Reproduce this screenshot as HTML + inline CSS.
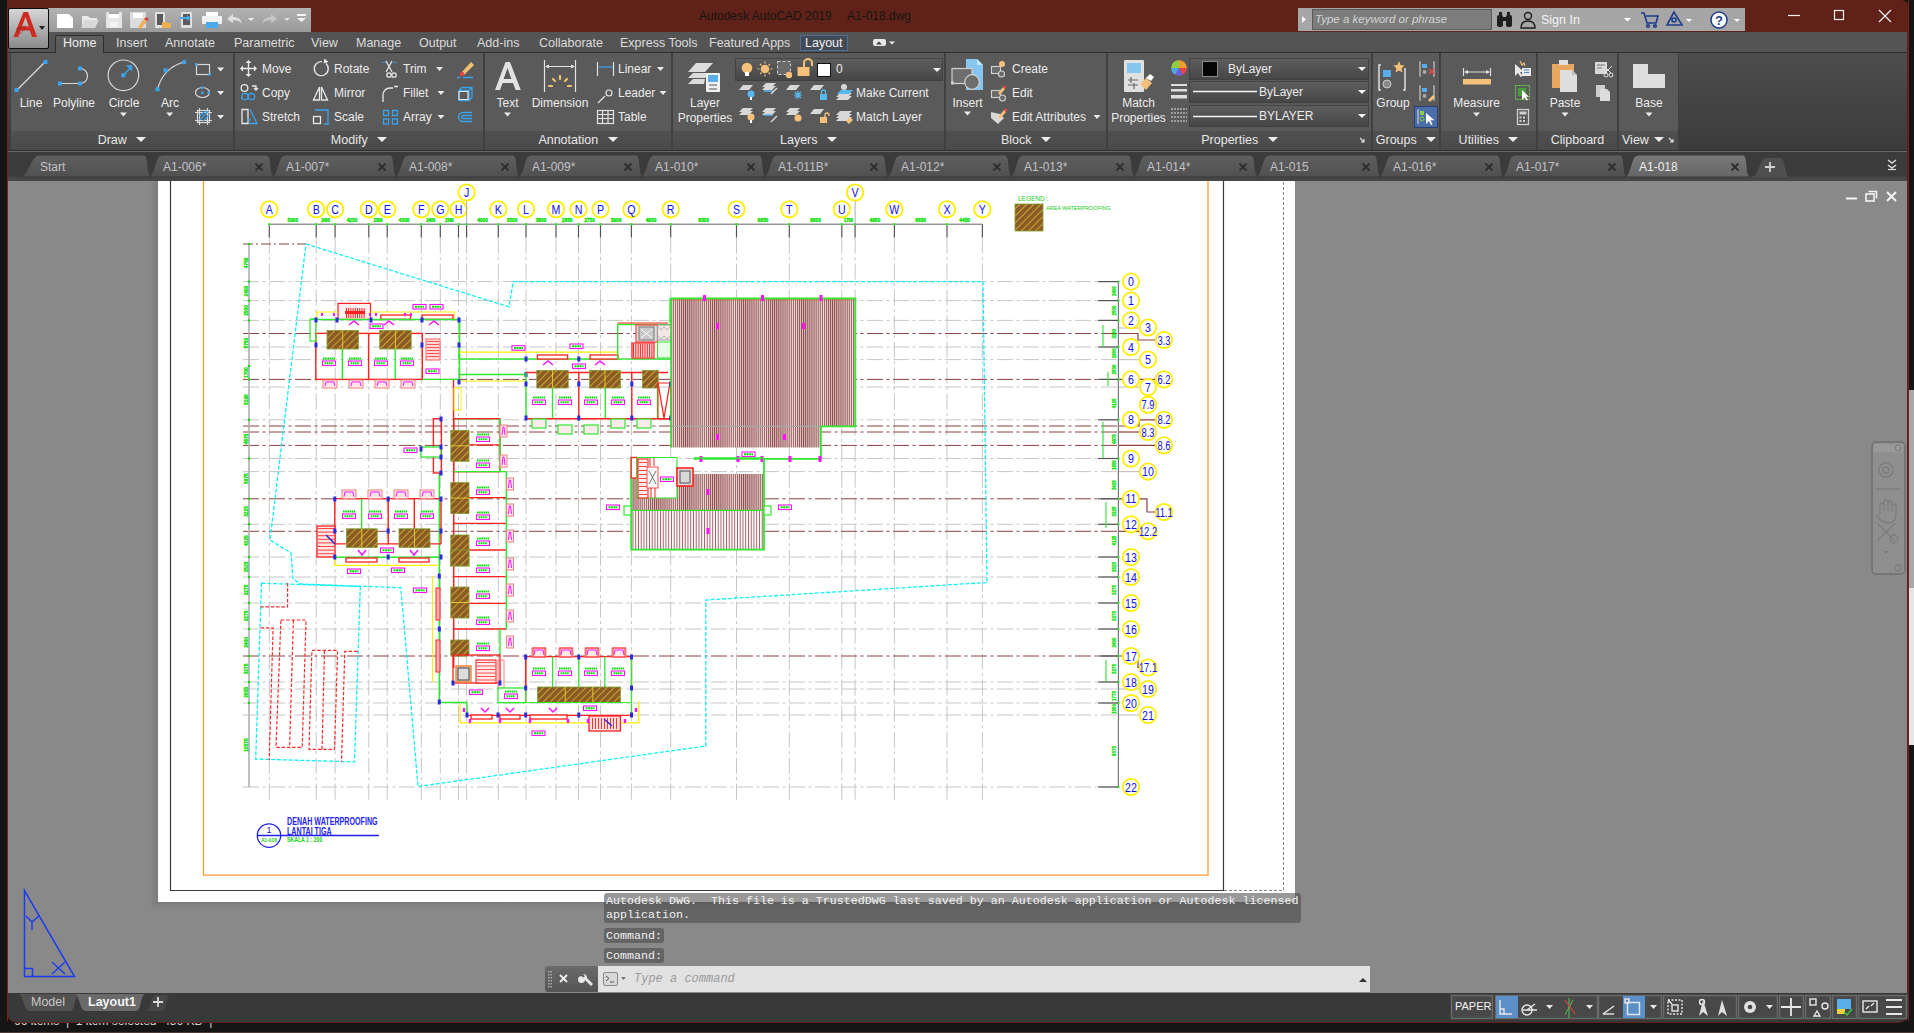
<!DOCTYPE html>
<html><head><meta charset="utf-8">
<style>
*{margin:0;padding:0;box-sizing:border-box}
html,body{width:1914px;height:1033px;overflow:hidden;background:#151515;font-family:"Liberation Sans",sans-serif;position:relative}
.a{position:absolute}
svg{position:absolute;overflow:visible}
.rt{position:absolute;top:36px;font-size:12.5px;color:#dcdcdc;line-height:14px;white-space:nowrap}
.pan{position:absolute;top:53px;height:97px;background:#5a5a5a;border-left:1px solid #404040;border-right:1px solid #404040}
.pt{position:absolute;top:131px;height:19px;background:linear-gradient(#505050,#4a4a4a);font-size:12.5px;color:#e8e8e8;line-height:18px;text-align:center}
.l{position:absolute;font-size:12px;color:#ececec;white-space:nowrap;line-height:14px}
.ft{position:absolute;top:156px;height:22px;font-size:12px;color:#c4c4c4;line-height:22px;white-space:nowrap}
.ftb{position:absolute;top:0;left:0;width:100%;height:22px}
.cx{position:absolute;top:0;font-size:12px;color:#9a9a9a}
.tri{display:inline-block;width:0;height:0;border-left:5px solid transparent;border-right:5px solid transparent;border-top:5.5px solid #ececec;margin-left:6px;vertical-align:2px}
.dd{position:absolute;width:0;height:0;border-left:3.5px solid transparent;border-right:3.5px solid transparent;border-top:4px solid #e6e6e6}
.lc{transform:translateX(-50%)}
.mono{font-family:"Liberation Mono",monospace;font-size:11.67px;color:#f2f2f2;line-height:14px;white-space:pre}
</style></head><body>
<!-- window frame -->
<div class="a" style="left:7px;top:0;width:1902px;height:1023px;background:#602218;border-radius:0 8px 10px 10px"></div>
<!-- title text -->
<div class="a" style="left:699px;top:9px;font-size:12px;color:#151515;white-space:pre">Autodesk AutoCAD 2019</div><div class="a" style="left:847px;top:9px;font-size:12px;color:#151515;white-space:pre">A1-018.dwg</div>
<!-- QAT -->
<div class="a" style="left:48px;top:8px;width:263px;height:24px;background:linear-gradient(#b2b2b2,#9a9a9a)"></div>
<svg style="left:0;top:0" width="320" height="32">
 <g fill="#fff"><path d="M57 14h12l4 4v10H57z"/></g>
 <path d="M82 16h6l2 2h7v2H86l-4 8z" fill="#e8e8e8"/><path d="M85 20h14l-4 8H81z" fill="#d8d8d8"/>
 <g fill="#e6e6e6"><rect x="106" y="12" width="16" height="16" rx="1"/></g><rect x="109" y="12" width="10" height="6" fill="#a8a8a8"/><rect x="110" y="22" width="8" height="5" fill="#f4f4f4"/><rect x="109" y="14" width="10" height="4" fill="#fff"/>
 <g fill="#dcdcdc"><rect x="130" y="12" width="16" height="16" rx="1"/></g><rect x="133" y="13" width="10" height="5" fill="#fff"/><path d="M138 27l6-8 3 2-6 8z" fill="#f0b060"/><path d="M144 19l2-2 3 2-2 2z" fill="#e04040"/>
 <rect x="155" y="12" width="10" height="16" rx="1" fill="#e0e0e0"/><rect x="157" y="14" width="6" height="11" fill="#5a5a5a"/><path d="M162 22h4l1 1h4v5h-9z" fill="#f0b050"/>
 <rect x="181" y="12" width="11" height="16" rx="1" fill="#e0e0e0"/><rect x="183" y="14" width="7" height="11" fill="#5a5a5a"/><path d="M180 17h7v-2l4 3-4 3v-2h-7z" fill="#4aa8ec"/>
 <rect x="206" y="12" width="12" height="4" fill="#fff"/><rect x="202" y="16" width="20" height="8" rx="1" fill="#f2f2f2"/><rect x="206" y="22" width="12" height="6" fill="#4aa8ec"/>
 <path d="M227 19l6-5v3c5 0 8 2 9 7-2-3-5-4-9-4v3z" fill="#e0e0e0"/>
 <path d="M248 18h6l-3 3z" fill="#f0f0f0"/>
 <path d="M277 19l-6-5v3c-5 0-8 2-9 7 2-3 5-4 9-4v3z" fill="#c6c6c6"/>
 <path d="M284 18h6l-3 3z" fill="#e0e0e0"/>
 <rect x="297" y="14" width="9" height="2" fill="#f4f4f4"/><path d="M297 18h9l-4.5 4z" fill="#f4f4f4"/>
</svg>
<!-- Info center -->
<div class="a" style="left:1298px;top:8px;width:447px;height:23px;background:#a6a6a6"></div>
<div class="a" style="left:1312px;top:9px;width:180px;height:21px;background:#7c7c7c;border:1px solid #5a5a5a"></div>
<div class="a" style="left:1315px;top:13px;font-size:11.5px;font-style:italic;color:#d4d4d4">Type a keyword or phrase</div>
<svg style="left:0;top:0" width="1914" height="32">
 <path d="M1302 16l4 3.5-4 3.5z" fill="#f4f4f4"/>
 <g fill="#1e1e1e"><rect x="1497" y="15" width="6" height="12" rx="2"/><rect x="1506" y="15" width="6" height="12" rx="2"/><rect x="1499" y="12" width="3" height="4"/><rect x="1507" y="12" width="3" height="4"/><rect x="1502" y="17" width="5" height="4"/></g>
 <g fill="none" stroke="#1e1e1e" stroke-width="1.4"><circle cx="1528" cy="16" r="3.5"/><path d="M1521 28c0-5 3-7 7-7s7 2 7 7z"/></g>
 <path d="M1624 18h7l-3.5 3.5z" fill="#fff"/>
 <g fill="none" stroke="#1c3c8c" stroke-width="1.6"><path d="M1641 13h3l3 10h9l2-7h-12"/><circle cx="1648" cy="26" r="1.3"/><circle cx="1655" cy="26" r="1.3"/></g>
 <g fill="none" stroke="#1c3c8c" stroke-width="1.6"><path d="M1674 12l-7 13h15z"/><circle cx="1674" cy="20" r="2"/></g>
 <path d="M1686 19h6l-3 3z" fill="#fff"/>
 <circle cx="1719" cy="20" r="8" fill="#fff" stroke="#1c3c8c" stroke-width="1.5"/>
 <text x="1715" y="25" font-size="13" font-weight="bold" fill="#1c3c8c" font-family="Liberation Sans">?</text>
 <path d="M1734 19h6l-3 3z" fill="#fff"/>
 <g stroke="#f0f0f0" stroke-width="1.2" fill="none"><path d="M1788 15.5h12"/><rect x="1834.5" y="10.5" width="9" height="9"/><path d="M1879 10l12 12M1891 10l-12 12"/></g>
</svg>
<div class="a" style="left:1541px;top:13px;font-size:12.5px;color:#f4f4f4">Sign In</div>

<!-- Ribbon tab bar -->
<div class="a" style="left:8px;top:32px;width:1899px;height:21px;background:#545454;border-bottom:1.5px solid #2e2e2e"></div>
<div class="a" style="left:55px;top:35px;width:49px;height:19px;background:linear-gradient(#5e5e5e,#5a5a5a);border:1px solid #2e2e2e;border-bottom:none;border-radius:2px 2px 0 0"></div>
<div class="a" style="left:800px;top:35px;width:48px;height:16px;border:1px solid #4f6e9a;background:#434a55"></div>
<div class="rt" style="left:63px;color:#f0f0f0">Home</div>
<div class="rt" style="left:116px">Insert</div>
<div class="rt" style="left:165px">Annotate</div>
<div class="rt" style="left:234px">Parametric</div>
<div class="rt" style="left:311px">View</div>
<div class="rt" style="left:356px">Manage</div>
<div class="rt" style="left:419px">Output</div>
<div class="rt" style="left:477px">Add-ins</div>
<div class="rt" style="left:539px">Collaborate</div>
<div class="rt" style="left:620px">Express Tools</div>
<div class="rt" style="left:709px">Featured Apps</div>
<div class="rt" style="left:805px;color:#f0f0f0">Layout</div>
<svg style="left:0;top:0" width="900" height="55">
 <rect x="873" y="39" width="13" height="7" rx="2" fill="#e8e8e8"/><path d="M876 44.5l3-3 3 3z" fill="#3c3c3c"/><path d="M889 41.5h6l-3 3z" fill="#e8e8e8"/>
</svg>

<!-- Ribbon body -->
<div class="a" style="left:8px;top:53px;width:1899px;height:98px;background:linear-gradient(#4d4d4d,#3b3b3b)"></div>
<div class="a" style="left:8px;top:150px;width:1899px;height:1px;background:#2e2e2e"></div><div class="a" style="left:8px;top:151px;width:1899px;height:1px;background:#6a6a6a"></div>
<div class="pan" style="left:10px;width:224px"></div>
<div class="pan" style="left:234px;width:250px"></div>
<div class="pan" style="left:484px;width:188px"></div>
<div class="pan" style="left:672px;width:273px"></div>
<div class="pan" style="left:945px;width:162px"></div>
<div class="pan" style="left:1107px;width:265px"></div>
<div class="pan" style="left:1372px;width:68px"></div>
<div class="pan" style="left:1440px;width:97px"></div>
<div class="pan" style="left:1537px;width:81px"></div>
<div class="pan" style="left:1618px;width:61px"></div>
<div class="pt" style="left:11px;width:222px">Draw <i class="tri"></i></div>
<div class="pt" style="left:235px;width:248px">Modify <i class="tri"></i></div>
<div class="pt" style="left:485px;width:186px">Annotation <i class="tri"></i></div>
<div class="pt" style="left:673px;width:271px">Layers <i class="tri"></i></div>
<div class="pt" style="left:946px;width:160px">Block <i class="tri"></i></div>
<div class="pt" style="left:1108px;width:263px">Properties <i class="tri"></i></div>
<div class="pt" style="left:1373px;width:66px">Groups <i class="tri"></i></div>
<div class="pt" style="left:1441px;width:95px">Utilities <i class="tri"></i></div>
<div class="pt" style="left:1538px;width:79px">Clipboard</div>
<div class="pt" style="left:1619px;width:59px;text-align:left;padding-left:3px">View<i class="tri" style="margin-left:5px"></i></div>
<!-- App button -->
<div class="a" style="left:8px;top:8px;width:41px;height:41px;border:1.5px solid #0c0c0c;border-radius:2px;background:linear-gradient(#d6d6d6,#8a8a8a)"></div>
<svg style="left:8px;top:8px" width="41" height="41">
 <path d="M5.5 29L15.5 4h4.5l9 25h-5l-2.2-6.5h-9.2L10.3 29z M14 18.5h6.8l-3.3-9.5z" fill="#cf2a22" fill-rule="evenodd"/><path d="M9 24l4-4M12 26l5-6M8 21l10-3" stroke="#7a1410" stroke-width="0.8" opacity="0.7"/>
 <path d="M31 18h6l-3 4z" fill="#222"/>
</svg>
<div id="ribbonc"></div>
<svg style="left:0;top:0" width="1700" height="152">
<defs>
 <g id="ddw"><path d="M-3.5 -2h7l-3.5 4z" fill="#ececec"/></g>
</defs>
<!-- Draw panel -->
<g stroke="#d8d8d8" stroke-width="1.2" fill="none">
 <path d="M17 90L45 62"/>
 <path d="M60 83.5h20M80 68.5a7.5 7.5 0 0 1 0 15"/>
 <circle cx="123.4" cy="75.3" r="15.3"/>
 <path d="M157.5 89.3Q163 68 184 62"/>
 <rect x="196.5" y="64.5" width="13" height="10"/>
 <ellipse cx="202.5" cy="92.5" rx="7" ry="5"/>
 <rect x="197.5" y="110.5" width="12" height="12"/><path d="M195 112.5h17M195 120.5h17M199.5 108v17M207.5 108v17"/>
</g>
<g fill="#3ba4ee">
 <rect x="14.5" y="88" width="4" height="4"/><rect x="43.5" y="60" width="4" height="4"/>
 <rect x="58" y="81.5" width="4" height="4"/><rect x="78" y="81.5" width="4" height="4"/><rect x="78" y="66.5" width="4" height="4"/>
 <rect x="121.4" y="73.3" width="4" height="4"/><path d="M124 74.5l6-6M127.5 66h4v4z" stroke="#3ba4ee" stroke-width="1.3"/>
 <rect x="155.5" y="87.3" width="4" height="4"/><rect x="163.5" y="68.4" width="4" height="4"/><rect x="182.3" y="60.2" width="4" height="4"/>
 <rect x="195" y="63" width="2.5" height="2.5"/><rect x="208.5" y="73" width="2.5" height="2.5"/>
 <rect x="201" y="86.5" width="2.5" height="2.5"/><rect x="201" y="91.5" width="2.5" height="2.5"/><rect x="207.5" y="91.5" width="2.5" height="2.5"/>
 <path d="M199.5 120l9-9M199.5 116l6-5M203 121l6-6" stroke="#3ba4ee" stroke-width="1.2"/>
</g>
<use href="#ddw" x="123.4" y="114.5"/><use href="#ddw" x="169.6" y="114.5"/>
<use href="#ddw" x="220.6" y="69.4"/><use href="#ddw" x="220.6" y="93"/><use href="#ddw" x="220.6" y="117"/>
<!-- Modify panel -->
<g stroke="#e8e8e8" stroke-width="1.3" fill="none">
 <path d="M248.5 61v15M241 68.5h15"/>
 <path d="M326 63.5a7 7 0 1 1 -4 -1.8"/>
 <path d="M313.5 100l6-13v13zM321.5 87l6 13h-6z" stroke="#e8e8e8"/>
 <path d="M252 86h4v3M254 88l2 2 2-2"/><circle cx="244.5" cy="88" r="3.3"/>
 <path d="M242 109.5h6v14h-6z"/>
 <rect x="313.5" y="116.5" width="7" height="7"/>
 <path d="M383 102v-7a7 7 0 0 1 7-7h3M394 86.5h4"/>
</g>
<g fill="#e8e8e8"><path d="M248.5 60l3 3h-6zM248.5 77l3-3h-6zM240 68.5l3-3v6zM257 68.5l-3-3v6z"/><path d="M324.5 58.5l4 3.5-5 1.5z"/></g>
<g stroke="#3ba4ee" stroke-width="1.3" fill="none">
 <circle cx="245" cy="96.5" r="3.2"/><circle cx="251.5" cy="96.5" r="3.2"/>
 <path d="M250 109.5l7 14h-8M247 120h4"/>
 <path d="M315 110h13v14h-4"/>
 <rect x="383.5" y="110.5" width="5" height="5"/><rect x="392.5" y="110.5" width="5" height="5"/><rect x="383.5" y="119" width="5" height="5"/><rect x="392.5" y="119" width="5" height="5"/>
 <path d="M472 112.5h-9a4.5 4.5 0 0 0 0 9h9M472 115.5h-9a1.5 1.5 0 0 0 0 3h9"/>
 <path d="M459 90.5h10v10h-10zM459 90.5l3-3h10v10l-3 3M469 90.5l3-3"/>
 <path d="M457 77.5h3M463 77.5h10"/>
</g>
<g stroke="#e8e8e8" stroke-width="1.2" fill="none"><path d="M459 91.5h9v8h-9z"/></g>
<g stroke="#e8e8e8" stroke-width="1.3" fill="none"><path d="M386 61l6 11M392 61l-6 11"/><circle cx="389" cy="75" r="2.2"/><circle cx="394" cy="75" r="2.2"/></g>
<path d="M382 62.5h4M393 62.5h5" stroke="#3ba4ee" stroke-width="1.2" stroke-dasharray="1.5 1"/>
<path d="M461 73l10-11 3 3-10 10z" fill="#f0c070"/><circle cx="462" cy="74" r="2.2" fill="#e84545"/>
<use href="#ddw" x="439.5" y="69"/><use href="#ddw" x="441" y="93"/><use href="#ddw" x="441" y="117"/>
<!-- Annotation -->
<path d="M495 90l10.5-28h4.5l10.8 28h-5.2l-2.6-7h-10.4l-2.6 7zM503.6 79h7.8l-3.9-11z" fill="#e2e2e2" fill-rule="evenodd"/>
<use href="#ddw" x="507.5" y="114.5"/>
<g stroke="#e2e2e2" stroke-width="1.2" fill="none"><path d="M544.5 60v32M575.5 60v32M546 66.5h28"/></g>
<g fill="#e2e2e2"><path d="M545 66.5l4-2v4zM575 66.5l-4-2v4z"/></g>
<g stroke="#f0c070" stroke-width="2.2" stroke-linecap="round"><path d="M560 76v3M553 79l2 2M567 79l-2 2M549 86h3M568 86h3"/></g>
<g stroke="#e2e2e2" stroke-width="1.2" fill="none"><path d="M597.5 62v14M613.5 62v14"/>
 <path d="M598 103l7-7"/><circle cx="609" cy="93" r="3"/>
 <rect x="597.5" y="110.5" width="16" height="13"/><path d="M597.5 114.5h16M597.5 118.5h16M602.5 110.5v13M608 110.5v13"/></g>
<path d="M599 67h14" stroke="#3ba4ee" stroke-width="1.2"/>
<use href="#ddw" x="660.5" y="69"/><use href="#ddw" x="663" y="93"/>
<!-- Layers -->
<g fill="#dcdcdc"><path d="M688 72l8-9h17l-8 9z"/><path d="M688 78l5-5h17l-5 5z"/><path d="M688 84l5-5h12l-1 5z"/></g>
<rect x="706" y="73" width="14" height="19" rx="1" fill="#f0f0f0"/><rect x="708" y="75" width="10" height="7" fill="#58aee8"/><path d="M709 85h8M709 89h8" stroke="#555" stroke-width="1"/>
<rect x="735.5" y="58.5" width="207" height="22" fill="url(#cbg)" stroke="#2e2e2e" stroke-dasharray="1 1"/>
<circle cx="747" cy="68" r="5.3" fill="#f5c07a"/><rect x="745" y="72" width="4" height="4" fill="#fff"/>
<circle cx="765" cy="69" r="4.3" fill="#f5c07a"/><g stroke="#f5c07a" stroke-width="1.2"><path d="M765 61.5v2M765 74.5v2M757.5 69h2M770.5 69h2M760 64l1.5 1.5M770 64l-1.5 1.5M760 74l1.5-1.5M770 74l-1.5-1.5"/></g>
<rect x="777.5" y="61.5" width="13" height="13" fill="#6a6a6a" stroke="#d0d0d0" stroke-dasharray="3 2"/><circle cx="789" cy="75" r="3.2" fill="#f5c07a"/>
<rect x="797.5" y="67" width="12" height="9" fill="#f5c07a"/><path d="M804 67v-4a4 4 0 0 1 8 0v3" stroke="#f5c07a" stroke-width="2" fill="none"/>
<rect x="817.5" y="63.5" width="13" height="13" fill="#fff" stroke="#111" stroke-width="1"/>
<path d="M933 68h8l-4 4z" fill="#f0f0f0"/>
<g fill="#d8d8d8">
 <path d="M739 90l4-5h10l-4 5z"/><path d="M762 87l4-4h10l-4 4zM762 90l4-4h10l-4 4z"/><path d="M786 90l4-5h10l-4 5z"/><path d="M810 90l4-5h10l-4 5z"/>
 <path d="M739 112l4-4h10l-4 4zM739 115l4-4h10l-4 4z"/><path d="M762 112l4-4h10l-4 4zM762 115l4-4h10l-4 4z"/><path d="M786 112l4-4h10l-4 4zM786 115l4-4h10l-4 4z"/><path d="M810 114l4-5h10l-4 5z"/>
 <path d="M836 97l4-4h12l-4 4zM836 100l4-4h12l-4 4z"/><path d="M836 121l4-4h12l-4 4zM836 118l4-4h12l-4 4zM836 115l4-4h12l-4 4z"/>
</g>
<circle cx="751" cy="94" r="3.5" fill="#58b8f0"/><rect x="750" y="97" width="2" height="3" fill="#fff"/>
<path d="M764 91h9" stroke="#58b8f0" stroke-width="1.5"/><path d="M777 88l-6 6" stroke="#e0e0e0" stroke-width="1.2"/>
<g stroke="#58b8f0" stroke-width="1.2"><path d="M798 91v8M794 95h8M795 92l6 6M801 92l-6 6"/></g>
<rect x="820" y="94" width="7" height="6" fill="#58b8f0"/><path d="M821.5 94v-2a2 2 0 0 1 4 0v2" stroke="#58b8f0" fill="none" stroke-width="1.3"/>
<path d="M837 94l4-4h12l-4 4z" fill="#58b8f0"/><circle cx="844" cy="87" r="3" fill="#d8d8d8"/>
<circle cx="751" cy="117" r="3.5" fill="#f5c07a"/><rect x="750" y="120" width="2" height="3" fill="#fff"/>
<path d="M764 115h9" stroke="#58b8f0" stroke-width="1.5"/><path d="M771 122l6-6" stroke="#e0e0e0" stroke-width="1.2"/>
<circle cx="798" cy="118" r="3.5" fill="#f5c07a"/>
<rect x="820" y="117" width="7" height="6" fill="#f5c07a"/><path d="M825 117v-2a2 2 0 0 1 4 0v1" stroke="#f5c07a" fill="none" stroke-width="1.3"/>
<path d="M846 121l4-4 3 3-4 4z" fill="#f5c07a"/>
<!-- Block -->
<path d="M966 59h11l6 6v25h-17z" fill="#86c6f0"/><path d="M977 59v6h6z" fill="#c8e4f8"/>
<rect x="952" y="68.5" width="20" height="15" fill="#6e6e6e" stroke="#d0d0d0" stroke-width="1.2"/>
<circle cx="972" cy="82" r="7.3" fill="#6e6e6e" stroke="#d0d0d0" stroke-width="1.2"/>
<rect x="951" y="81.5" width="3" height="3" fill="#d0d0d0"/>
<use href="#ddw" x="967.5" y="113.5"/>
<g stroke="#d0d0d0" stroke-width="1.1" fill="#6a6a6a"><rect x="991.5" y="66.5" width="9" height="7"/><circle cx="1001.5" cy="74" r="3"/><rect x="991.5" y="90.5" width="9" height="7"/><circle cx="1002.5" cy="98" r="3"/></g>
<circle cx="1002" cy="64" r="3" fill="#f5c07a"/>
<path d="M998 93l5-6 2 2-5 6z" fill="#f5c07a"/><path d="M1003 87l1.5-2 2 2-1.5 2z" fill="#e84545"/>
<path d="M991 112v6l7 6 6-6-4-4z" fill="#d8d8d8"/><path d="M998 117l6-7 2 2-6 7z" fill="#f5c07a"/><path d="M1004 110l1.5-2 2 2-1.5 2z" fill="#e84545"/>
<use href="#ddw" x="1097" y="117"/>
<!-- Properties -->
<rect x="1124" y="60" width="20" height="32" rx="1" fill="#e0e0e0"/><rect x="1127" y="63" width="14" height="10" fill="#86c6f0"/>
<path d="M1128 80h10M1128 85h10M1131 77v6M1134 83v6" stroke="#666" stroke-width="1.2"/>
<path d="M1140 84l6-6 6 5-6 7z" fill="#f5c07a"/><path d="M1146 78l4-4 4 3-3 4z" fill="#fff"/>
<circle cx="1179" cy="68" r="7.8" fill="#e84545"/><path d="M1179 68v-7.8a7.8 7.8 0 0 1 7.8 7.8z" fill="#f0a030"/><path d="M1179 68h-7.8a7.8 7.8 0 0 1 7.8 -7.8z" fill="#8ad040"/><path d="M1179 68h-7.8a7.8 7.8 0 0 0 4 6.8z" fill="#4aa8ec"/><path d="M1179 68l-3.8 6.8a7.8 7.8 0 0 0 7.6 0z" fill="#6060e0"/>
<g fill="#dedede"><rect x="1171" y="84" width="16" height="2"/><rect x="1171" y="89" width="16" height="2.5"/><rect x="1171" y="95" width="16" height="3.5"/></g>
<g stroke="#dedede" stroke-width="1.2" stroke-dasharray="2 1"><path d="M1171 109h16M1171 113h16M1171 117h16M1171 121h16"/></g>
<linearGradient id="cbg" x1="0" x2="0" y1="0" y2="1"><stop offset="0" stop-color="#5e5e5e"/><stop offset="1" stop-color="#464646"/></linearGradient><g fill="url(#cbg)" stroke="#2e2e2e" stroke-dasharray="1 1"><rect x="1189.5" y="58.5" width="179" height="21"/><rect x="1189.5" y="81.5" width="179" height="21"/><rect x="1189.5" y="105.5" width="179" height="21"/></g>
<rect x="1202.5" y="61.5" width="15" height="15" fill="#050505" stroke="#888"/>
<path d="M1193 91.5h64M1193 116.5h64" stroke="#f4f4f4" stroke-width="1.3"/>
<path d="M1358 67h8l-4 4zM1358 90h8l-4 4zM1358 114h8l-4 4z" fill="#f0f0f0"/>
<path d="M1360 138l4 4M1364 139v3h-3" stroke="#e0e0e0" stroke-width="1.1" fill="none"/>
<!-- Groups -->
<path d="M1381 65h-2v25h2M1405 68v22h-2" stroke="#e0e0e0" stroke-width="1.5" fill="none"/>
<rect x="1383" y="70" width="8" height="7" fill="#58aee8"/><circle cx="1387" cy="84" r="4" fill="#888" stroke="#ccc"/>
<path d="M1399 61l1.5 4 4 .5-3 3 1 4-3.5-2-3.5 2 1-4-3-3 4-.5z" fill="#f5c07a"/>
<g stroke="#d0d0d0" stroke-width="1.1" fill="none"><path d="M1421 62h-1v14h1M1433 62h1v14h-1M1421 86h-1v14h1M1433 86h1v14h-1"/></g>
<rect x="1422" y="64" width="5" height="4" fill="#58aee8"/><circle cx="1424.5" cy="72" r="2" fill="#aaa"/>
<path d="M1429 69l5 5M1434 69l-5 5" stroke="#e84545" stroke-width="1.5"/>
<rect x="1422" y="88" width="5" height="4" fill="#58aee8"/><circle cx="1424.5" cy="96" r="2" fill="#aaa"/><path d="M1428 100l5-5 2 2-5 5z" fill="#f5c07a"/>
<rect x="1414.5" y="106.5" width="23" height="21" fill="#4c6ea8" stroke="#2a3e70"/>
<path d="M1419 110h-1v13h1" stroke="#ddd" fill="none"/><rect x="1420" y="111" width="4" height="4" fill="#8ad040"/><circle cx="1422" cy="119" r="2" fill="none" stroke="#8ad040"/>
<path d="M1426 113v11l3-3 2 4 1.5-.7-2-4h4z" fill="#fff"/>
<!-- Utilities -->
<rect x="1463" y="79" width="28" height="5.5" fill="#f5c07a"/>
<path d="M1463.5 68v8M1490.5 68v8M1465 72h24" stroke="#e0e0e0" stroke-width="1.2"/>
<path d="M1464 72l4-2v4zM1490 72l-4-2v4z" fill="#e0e0e0"/>
<use href="#ddw" x="1476.5" y="114.4"/>
<path d="M1515 64v12l3-3 2.5 4 2-1-2.5-4h4z" fill="#e8e8e8"/><rect x="1522" y="68" width="9" height="8" fill="#e8e8e8"/><path d="M1524 70h5M1524 72.5h5" stroke="#4a8ad0"/><path d="M1520 61l2 4 2-2 1 3" stroke="#f5c07a" fill="none" stroke-width="1.2"/>
<rect x="1515.5" y="85.5" width="14" height="14" fill="none" stroke="#6ad040" stroke-dasharray="2 1"/><rect x="1518" y="88" width="8" height="8" fill="#4a9a40"/><path d="M1522 90v10l2.5-2.5 2 3 1.5-.8-2-3h3z" fill="#fff"/>
<rect x="1517.5" y="109.5" width="11" height="15" fill="none" stroke="#d0d0d0" stroke-width="1.3"/><rect x="1519.5" y="111.5" width="7" height="3" fill="#d0d0d0"/><g fill="#d0d0d0"><rect x="1519.5" y="116.5" width="2" height="2"/><rect x="1523" y="116.5" width="2" height="2"/><rect x="1519.5" y="120" width="2" height="2"/><rect x="1523" y="120" width="2" height="2"/></g>
<!-- Clipboard -->
<rect x="1552" y="64" width="22" height="24" fill="#e8a860"/><rect x="1559" y="60" width="9" height="5" fill="#e0e0e0"/>
<path d="M1560 70h12l5 5v17h-17z" fill="#dedede"/><path d="M1572 70v5h5z" fill="#bdbdbd"/>
<use href="#ddw" x="1565" y="114.4"/>
<rect x="1595" y="62" width="12" height="12" fill="#d8d8d8"/><path d="M1597 65h8M1597 68h5" stroke="#777"/><circle cx="1606" cy="75" r="2" fill="none" stroke="#e0e0e0"/><circle cx="1611" cy="75" r="2" fill="none" stroke="#e0e0e0"/><path d="M1604 66l7 7M1612 66l-7 7" stroke="#e0e0e0"/>
<rect x="1596" y="85" width="9" height="12" fill="#cdcdcd"/><path d="M1600 89h7l3 3v9h-10z" fill="#dcdcdc"/>
<!-- View -->
<path d="M1633 64h15v10h17v14h-32z" fill="#dedede"/>
<use href="#ddw" x="1649" y="114.4"/>
<path d="M1669 138l4 4M1673 139v3h-3" stroke="#e0e0e0" stroke-width="1.1" fill="none"/>
</svg>
<div class="l lc" style="left:31px;top:96px">Line</div>
<div class="l lc" style="left:74px;top:96px">Polyline</div>
<div class="l lc" style="left:124px;top:96px">Circle</div>
<div class="l lc" style="left:170px;top:96px">Arc</div>
<div class="l" style="left:262px;top:62px">Move</div>
<div class="l" style="left:262px;top:86px">Copy</div>
<div class="l" style="left:262px;top:110px">Stretch</div>
<div class="l" style="left:334px;top:62px">Rotate</div>
<div class="l" style="left:334px;top:86px">Mirror</div>
<div class="l" style="left:334px;top:110px">Scale</div>
<div class="l" style="left:403px;top:62px">Trim</div>
<div class="l" style="left:403px;top:86px">Fillet</div>
<div class="l" style="left:403px;top:110px">Array</div>
<div class="l lc" style="left:507.5px;top:96px">Text</div>
<div class="l lc" style="left:560px;top:96px">Dimension</div>
<div class="l" style="left:618px;top:62px">Linear</div>
<div class="l" style="left:618px;top:86px">Leader</div>
<div class="l" style="left:618px;top:110px">Table</div>
<div class="l lc" style="left:705px;top:96px">Layer</div>
<div class="l lc" style="left:705px;top:111px">Properties</div>
<div class="l" style="left:836px;top:62px">0</div>
<div class="l" style="left:856px;top:86px">Make Current</div>
<div class="l" style="left:856px;top:110px">Match Layer</div>
<div class="l lc" style="left:967.5px;top:96px">Insert</div>
<div class="l" style="left:1012px;top:62px">Create</div>
<div class="l" style="left:1012px;top:86px">Edit</div>
<div class="l" style="left:1012px;top:110px">Edit Attributes</div>
<div class="l lc" style="left:1138.5px;top:96px">Match</div>
<div class="l lc" style="left:1138.5px;top:111px">Properties</div>
<div class="l" style="left:1228px;top:62px">ByLayer</div>
<div class="l" style="left:1259px;top:85px">ByLayer</div>
<div class="l" style="left:1259px;top:109px">BYLAYER</div>
<div class="l lc" style="left:1393px;top:96px">Group</div>
<div class="l lc" style="left:1476.5px;top:96px">Measure</div>
<div class="l lc" style="left:1565px;top:96px">Paste</div>
<div class="l lc" style="left:1649px;top:96px">Base</div>


<!-- File tabs -->
<div class="a" style="left:8px;top:152px;width:1899px;height:29px;background:#3b3b3b"></div>
<svg style="left:0;top:0" width="1914" height="181">
<rect x="8" y="176.5" width="1899" height="4.5" fill="#474747"/>
<defs><linearGradient id="tg" x1="0" y1="0" x2="0" y2="1"><stop offset="0" stop-color="#5f5f5f"/><stop offset="1" stop-color="#505050"/></linearGradient><linearGradient id="tga" x1="0" y1="0" x2="0" y2="1"><stop offset="0" stop-color="#7a7a7a"/><stop offset="1" stop-color="#656565"/></linearGradient></defs>
<path d="M20 177C27 177 31 155 39 155H144C150 155 146 177 152 177Z" fill="url(#tg)" stroke="#3a3a3a" stroke-width="1"/>
<path d="M148 177C155 177 154 155 162 155H267C273 155 269 177 275 177Z" fill="url(#tg)" stroke="#3a3a3a" stroke-width="1"/>
<path d="M255.5 163.5l7 7M262.5 163.5l-7 7" stroke="#2e2e2e" stroke-width="1.8"/>
<path d="M271 177C278 177 277 155 285 155H390C396 155 392 177 398 177Z" fill="url(#tg)" stroke="#3a3a3a" stroke-width="1"/>
<path d="M378.5 163.5l7 7M385.5 163.5l-7 7" stroke="#2e2e2e" stroke-width="1.8"/>
<path d="M394 177C401 177 400 155 408 155H513C519 155 515 177 521 177Z" fill="url(#tg)" stroke="#3a3a3a" stroke-width="1"/>
<path d="M501.5 163.5l7 7M508.5 163.5l-7 7" stroke="#2e2e2e" stroke-width="1.8"/>
<path d="M517 177C524 177 523 155 531 155H636C642 155 638 177 644 177Z" fill="url(#tg)" stroke="#3a3a3a" stroke-width="1"/>
<path d="M624.5 163.5l7 7M631.5 163.5l-7 7" stroke="#2e2e2e" stroke-width="1.8"/>
<path d="M640 177C647 177 646 155 654 155H759C765 155 761 177 767 177Z" fill="url(#tg)" stroke="#3a3a3a" stroke-width="1"/>
<path d="M747.5 163.5l7 7M754.5 163.5l-7 7" stroke="#2e2e2e" stroke-width="1.8"/>
<path d="M763 177C770 177 769 155 777 155H882C888 155 884 177 890 177Z" fill="url(#tg)" stroke="#3a3a3a" stroke-width="1"/>
<path d="M870.5 163.5l7 7M877.5 163.5l-7 7" stroke="#2e2e2e" stroke-width="1.8"/>
<path d="M886 177C893 177 892 155 900 155H1005C1011 155 1007 177 1013 177Z" fill="url(#tg)" stroke="#3a3a3a" stroke-width="1"/>
<path d="M993.5 163.5l7 7M1000.5 163.5l-7 7" stroke="#2e2e2e" stroke-width="1.8"/>
<path d="M1009 177C1016 177 1015 155 1023 155H1128C1134 155 1130 177 1136 177Z" fill="url(#tg)" stroke="#3a3a3a" stroke-width="1"/>
<path d="M1116.5 163.5l7 7M1123.5 163.5l-7 7" stroke="#2e2e2e" stroke-width="1.8"/>
<path d="M1132 177C1139 177 1138 155 1146 155H1251C1257 155 1253 177 1259 177Z" fill="url(#tg)" stroke="#3a3a3a" stroke-width="1"/>
<path d="M1239.5 163.5l7 7M1246.5 163.5l-7 7" stroke="#2e2e2e" stroke-width="1.8"/>
<path d="M1255 177C1262 177 1261 155 1269 155H1374C1380 155 1376 177 1382 177Z" fill="url(#tg)" stroke="#3a3a3a" stroke-width="1"/>
<path d="M1362.5 163.5l7 7M1369.5 163.5l-7 7" stroke="#2e2e2e" stroke-width="1.8"/>
<path d="M1378 177C1385 177 1384 155 1392 155H1497C1503 155 1499 177 1505 177Z" fill="url(#tg)" stroke="#3a3a3a" stroke-width="1"/>
<path d="M1485.5 163.5l7 7M1492.5 163.5l-7 7" stroke="#2e2e2e" stroke-width="1.8"/>
<path d="M1501 177C1508 177 1507 155 1515 155H1620C1626 155 1622 177 1628 177Z" fill="url(#tg)" stroke="#3a3a3a" stroke-width="1"/>
<path d="M1608.5 163.5l7 7M1615.5 163.5l-7 7" stroke="#2e2e2e" stroke-width="1.8"/>
<path d="M1624 177C1631 177 1630 155 1638 155H1743C1749 155 1745 177 1751 177Z" fill="url(#tga)" stroke="#3a3a3a" stroke-width="1"/>
<path d="M1731.5 163.5l7 7M1738.5 163.5l-7 7" stroke="#2e2e2e" stroke-width="1.8"/>
<path d="M1752 177C1758 177 1760 158 1766 158H1780C1786 158 1784 177 1790 177Z" fill="#4f4f4f"/>
<path d="M1765 167h10M1770 162v10" stroke="#d0d0d0" stroke-width="1.8"/>
<path d="M1888 160l4 3 4-3M1888 165l4 3 4-3" stroke="#ddd" stroke-width="1.5" fill="none"/><path d="M1888 169.5h8" stroke="#ddd" stroke-width="1.2"/>
</svg>
<div class="ft" style="left:40px;color:#c2c2c8">Start</div>
<div class="ft" style="left:163px;color:#c2c2c8">A1-006*</div>
<div class="ft" style="left:286px;color:#c2c2c8">A1-007*</div>
<div class="ft" style="left:409px;color:#c2c2c8">A1-008*</div>
<div class="ft" style="left:532px;color:#c2c2c8">A1-009*</div>
<div class="ft" style="left:655px;color:#c2c2c8">A1-010*</div>
<div class="ft" style="left:778px;color:#c2c2c8">A1-011B*</div>
<div class="ft" style="left:901px;color:#c2c2c8">A1-012*</div>
<div class="ft" style="left:1024px;color:#c2c2c8">A1-013*</div>
<div class="ft" style="left:1147px;color:#c2c2c8">A1-014*</div>
<div class="ft" style="left:1270px;color:#c2c2c8">A1-015</div>
<div class="ft" style="left:1393px;color:#c2c2c8">A1-016*</div>
<div class="ft" style="left:1516px;color:#c2c2c8">A1-017*</div>
<div class="ft" style="left:1639px;color:#f0f0f0">A1-018</div>

<!-- Drawing area -->
<div class="a" style="left:8px;top:181px;width:1899px;height:812px;background:#898989;overflow:hidden" id="dwg"><svg style="left:-8px;top:-181px" width="1914" height="1033"><defs>
<pattern id="rh" width="2.07" height="4" patternUnits="userSpaceOnUse"><rect width="2.07" height="4" fill="#eddada"/><rect x="0" width="1.05" height="4" fill="#8e4c4c"/></pattern>
<pattern id="rh2" width="2.75" height="4" patternUnits="userSpaceOnUse"><rect width="2.75" height="4" fill="#fdf6f6"/><rect x="0" width="0.85" height="4" fill="#985656"/></pattern>
<pattern id="bh" width="5" height="5" patternUnits="userSpaceOnUse" patternTransform="rotate(45)"><rect width="5" height="5" fill="#8a5c24"/><rect width="1" height="5" fill="#c9a43a"/></pattern>
</defs>
<linearGradient id="shl" x1="0" x2="1" y1="0" y2="0"><stop offset="0" stop-color="#898989"/><stop offset="1" stop-color="#7a7a7a"/></linearGradient><linearGradient id="shb" x1="0" x2="0" y1="0" y2="1"><stop offset="0" stop-color="#7c7c7c"/><stop offset="1" stop-color="#898989"/></linearGradient>
<rect x="150" y="170" width="8" height="740" fill="url(#shl)"/><rect x="152" y="902" width="1143" height="8" fill="url(#shb)"/>
<rect x="158" y="170" width="1137" height="732" fill="#fff"/>
<path d="M170.5 170V890.5H1223.5V170" fill="none" stroke="#3a3a3a" stroke-width="1.2"/>
<path d="M1224 890.5H1283.5V170" fill="none" stroke="#888" stroke-width="1" stroke-dasharray="3 2"/>
<path d="M203.5 170V875.2H1208V170" fill="none" stroke="#ff9a30" stroke-width="1.3"/>
<path d="M269.3 237.6V803.4" stroke="#c6c6c6" stroke-width="1" stroke-dasharray="16 3.5 3 3.5"/>
<path d="M269.3 224.2V237.6" stroke="#555" stroke-width="1.2"/>
<path d="M316.2 237.6V803.4" stroke="#c6c6c6" stroke-width="1" stroke-dasharray="16 3.5 3 3.5"/>
<path d="M316.2 224.2V237.6" stroke="#555" stroke-width="1.2"/>
<path d="M335.1 237.6V803.4" stroke="#c6c6c6" stroke-width="1" stroke-dasharray="16 3.5 3 3.5"/>
<path d="M335.1 224.2V237.6" stroke="#555" stroke-width="1.2"/>
<path d="M368.8 237.6V803.4" stroke="#c6c6c6" stroke-width="1" stroke-dasharray="16 3.5 3 3.5"/>
<path d="M368.8 224.2V237.6" stroke="#555" stroke-width="1.2"/>
<path d="M387.2 237.6V803.4" stroke="#c6c6c6" stroke-width="1" stroke-dasharray="16 3.5 3 3.5"/>
<path d="M387.2 224.2V237.6" stroke="#555" stroke-width="1.2"/>
<path d="M421.3 237.6V803.4" stroke="#c6c6c6" stroke-width="1" stroke-dasharray="16 3.5 3 3.5"/>
<path d="M421.3 224.2V237.6" stroke="#555" stroke-width="1.2"/>
<path d="M440.3 237.6V803.4" stroke="#c6c6c6" stroke-width="1" stroke-dasharray="16 3.5 3 3.5"/>
<path d="M440.3 224.2V237.6" stroke="#555" stroke-width="1.2"/>
<path d="M458.5 237.6V803.4" stroke="#c6c6c6" stroke-width="1" stroke-dasharray="16 3.5 3 3.5"/>
<path d="M458.5 224.2V237.6" stroke="#555" stroke-width="1.2"/>
<path d="M466.6 237.6V803.4" stroke="#c6c6c6" stroke-width="1" stroke-dasharray="16 3.5 3 3.5"/>
<path d="M466.6 224.2V237.6" stroke="#555" stroke-width="1.2"/>
<path d="M498.3 237.6V803.4" stroke="#c6c6c6" stroke-width="1" stroke-dasharray="16 3.5 3 3.5"/>
<path d="M498.3 224.2V237.6" stroke="#555" stroke-width="1.2"/>
<path d="M526 237.6V803.4" stroke="#c6c6c6" stroke-width="1" stroke-dasharray="16 3.5 3 3.5"/>
<path d="M526 224.2V237.6" stroke="#555" stroke-width="1.2"/>
<path d="M556 237.6V803.4" stroke="#c6c6c6" stroke-width="1" stroke-dasharray="16 3.5 3 3.5"/>
<path d="M556 224.2V237.6" stroke="#555" stroke-width="1.2"/>
<path d="M578.5 237.6V803.4" stroke="#c6c6c6" stroke-width="1" stroke-dasharray="16 3.5 3 3.5"/>
<path d="M578.5 224.2V237.6" stroke="#555" stroke-width="1.2"/>
<path d="M600.5 237.6V803.4" stroke="#c6c6c6" stroke-width="1" stroke-dasharray="16 3.5 3 3.5"/>
<path d="M600.5 224.2V237.6" stroke="#555" stroke-width="1.2"/>
<path d="M631.4 237.6V803.4" stroke="#c6c6c6" stroke-width="1" stroke-dasharray="16 3.5 3 3.5"/>
<path d="M631.4 224.2V237.6" stroke="#555" stroke-width="1.2"/>
<path d="M670.7 237.6V803.4" stroke="#c6c6c6" stroke-width="1" stroke-dasharray="16 3.5 3 3.5"/>
<path d="M670.7 224.2V237.6" stroke="#555" stroke-width="1.2"/>
<path d="M736.5 237.6V803.4" stroke="#c6c6c6" stroke-width="1" stroke-dasharray="16 3.5 3 3.5"/>
<path d="M736.5 224.2V237.6" stroke="#555" stroke-width="1.2"/>
<path d="M789.3 237.6V803.4" stroke="#c6c6c6" stroke-width="1" stroke-dasharray="16 3.5 3 3.5"/>
<path d="M789.3 224.2V237.6" stroke="#555" stroke-width="1.2"/>
<path d="M841.8 237.6V803.4" stroke="#c6c6c6" stroke-width="1" stroke-dasharray="16 3.5 3 3.5"/>
<path d="M841.8 224.2V237.6" stroke="#555" stroke-width="1.2"/>
<path d="M855.1 237.6V803.4" stroke="#c6c6c6" stroke-width="1" stroke-dasharray="16 3.5 3 3.5"/>
<path d="M855.1 224.2V237.6" stroke="#555" stroke-width="1.2"/>
<path d="M894.4 237.6V803.4" stroke="#c6c6c6" stroke-width="1" stroke-dasharray="16 3.5 3 3.5"/>
<path d="M894.4 224.2V237.6" stroke="#555" stroke-width="1.2"/>
<path d="M947 237.6V803.4" stroke="#c6c6c6" stroke-width="1" stroke-dasharray="16 3.5 3 3.5"/>
<path d="M947 224.2V237.6" stroke="#555" stroke-width="1.2"/>
<path d="M982.4 237.6V803.4" stroke="#c6c6c6" stroke-width="1" stroke-dasharray="16 3.5 3 3.5"/>
<path d="M982.4 224.2V237.6" stroke="#555" stroke-width="1.2"/>
<path d="M243 281.6H1118" stroke="#c6c6c6" stroke-width="1" stroke-dasharray="16 3.5 3 3.5"/>
<path d="M243 300.6H1118" stroke="#c6c6c6" stroke-width="1" stroke-dasharray="16 3.5 3 3.5"/>
<path d="M243 320.4H1118" stroke="#c6c6c6" stroke-width="1" stroke-dasharray="16 3.5 3 3.5"/>
<path d="M243 333.5H1118" stroke="#8e4040" stroke-width="1" stroke-dasharray="16 3.5 3 3.5"/>
<path d="M243 347H1118" stroke="#c6c6c6" stroke-width="1" stroke-dasharray="16 3.5 3 3.5"/>
<path d="M243 359.6H1118" stroke="#c6c6c6" stroke-width="1" stroke-dasharray="16 3.5 3 3.5"/>
<path d="M243 379.4H1118" stroke="#8e4040" stroke-width="1" stroke-dasharray="16 3.5 3 3.5"/>
<path d="M243 387H1118" stroke="#c6c6c6" stroke-width="1" stroke-dasharray="16 3.5 3 3.5"/>
<path d="M243 419.8H1118" stroke="#c6c6c6" stroke-width="1" stroke-dasharray="16 3.5 3 3.5"/>
<path d="M243 432H1118" stroke="#8e4040" stroke-width="1" stroke-dasharray="16 3.5 3 3.5"/>
<path d="M243 426H1118" stroke="#8e4040" stroke-width="1" stroke-dasharray="16 3.5 3 3.5"/>
<path d="M243 445.4H1118" stroke="#8e4040" stroke-width="1" stroke-dasharray="16 3.5 3 3.5"/>
<path d="M243 458.5H1118" stroke="#c6c6c6" stroke-width="1" stroke-dasharray="16 3.5 3 3.5"/>
<path d="M243 471.6H1118" stroke="#c6c6c6" stroke-width="1" stroke-dasharray="16 3.5 3 3.5"/>
<path d="M243 498.8H1118" stroke="#8e4040" stroke-width="1" stroke-dasharray="16 3.5 3 3.5"/>
<path d="M243 524.3H1118" stroke="#c6c6c6" stroke-width="1" stroke-dasharray="16 3.5 3 3.5"/>
<path d="M243 531.3H1118" stroke="#8e4040" stroke-width="1" stroke-dasharray="16 3.5 3 3.5"/>
<path d="M243 557H1118" stroke="#c6c6c6" stroke-width="1" stroke-dasharray="16 3.5 3 3.5"/>
<path d="M243 577H1118" stroke="#c6c6c6" stroke-width="1" stroke-dasharray="16 3.5 3 3.5"/>
<path d="M243 603H1118" stroke="#c6c6c6" stroke-width="1" stroke-dasharray="16 3.5 3 3.5"/>
<path d="M243 629H1118" stroke="#c6c6c6" stroke-width="1" stroke-dasharray="16 3.5 3 3.5"/>
<path d="M243 656H1118" stroke="#8e4040" stroke-width="1" stroke-dasharray="16 3.5 3 3.5"/>
<path d="M243 682H1118" stroke="#c6c6c6" stroke-width="1" stroke-dasharray="16 3.5 3 3.5"/>
<path d="M243 689H1118" stroke="#c6c6c6" stroke-width="1" stroke-dasharray="16 3.5 3 3.5"/>
<path d="M243 703H1118" stroke="#c6c6c6" stroke-width="1" stroke-dasharray="16 3.5 3 3.5"/>
<path d="M243 715H1118" stroke="#c6c6c6" stroke-width="1" stroke-dasharray="16 3.5 3 3.5"/>
<path d="M243 787H1118" stroke="#c6c6c6" stroke-width="1" stroke-dasharray="16 3.5 3 3.5"/>
<path d="M1118 328L1140 328" fill="none" stroke="#c6c6c6" stroke-width="1.2"/>
<path d="M1118 359.6L1140 359.6" fill="none" stroke="#c6c6c6" stroke-width="1.2"/>
<path d="M1118 387L1140 387" fill="none" stroke="#c6c6c6" stroke-width="1.2"/>
<path d="M1118 333.5L1138 333.5L1138 340L1156 340" fill="none" stroke="#8e4040" stroke-width="1.2"/>
<path d="M1118 379.4L1156 379.4" fill="none" stroke="#8e4040" stroke-width="1.2"/>
<path d="M1118 426L1139 426L1139 419.8L1156 419.8" fill="none" stroke="#8e4040" stroke-width="1.2"/>
<path d="M1118 432L1140 432" fill="none" stroke="#8e4040" stroke-width="1.2"/>
<path d="M1118 445.4L1156 445.4" fill="none" stroke="#8e4040" stroke-width="1.2"/>
<path d="M1118 471.6L1140 471.6" fill="none" stroke="#c6c6c6" stroke-width="1.2"/>
<path d="M1118 498.8L1147 498.8L1147 512L1156 512" fill="none" stroke="#8e4040" stroke-width="1.2"/>
<path d="M1118 531.3L1140 531.3" fill="none" stroke="#8e4040" stroke-width="1.2"/>
<path d="M1118 656L1138 656L1138 667.5L1140 667.5" fill="none" stroke="#8e4040" stroke-width="1.2"/>
<path d="M1118 689L1140 689" fill="none" stroke="#c6c6c6" stroke-width="1.2"/>
<path d="M1118 715L1140 715" fill="none" stroke="#c6c6c6" stroke-width="1.2"/>
<path d="M269.3 224.2H982.4" stroke="#666" stroke-width="1"/>
<path d="M249 244V787" stroke="#b0b0b0" stroke-width="1.6"/>
<path d="M1118.4 281.6V787" stroke="#777" stroke-width="1.2"/>
<path d="M243 244H306" stroke="#8e4040" stroke-width="1" stroke-dasharray="10 3 2 3"/>
<circle cx="269.3" cy="224.2" r="1.2" fill="#2ee82e"/>
<text x="292.8" y="222.5" font-size="6" font-weight="bold" text-anchor="middle" fill="#00e000" stroke="#00e000" stroke-width="0.35" font-family="Liberation Sans" transform="translate(292.8 222) scale(0.8 1) translate(-292.8 -222)">5900</text>
<circle cx="316.2" cy="224.2" r="1.2" fill="#2ee82e"/>
<text x="325.6" y="222.5" font-size="5" font-weight="bold" text-anchor="middle" fill="#00e000" stroke="#00e000" stroke-width="0.35" font-family="Liberation Sans" transform="translate(325.6 222) scale(0.8 1) translate(-325.6 -222)">2400</text>
<circle cx="335.1" cy="224.2" r="1.2" fill="#2ee82e"/>
<text x="352.0" y="222.5" font-size="6" font-weight="bold" text-anchor="middle" fill="#00e000" stroke="#00e000" stroke-width="0.35" font-family="Liberation Sans" transform="translate(352.0 222) scale(0.8 1) translate(-352.0 -222)">4250</text>
<circle cx="368.8" cy="224.2" r="1.2" fill="#2ee82e"/>
<text x="378.0" y="222.5" font-size="5" font-weight="bold" text-anchor="middle" fill="#00e000" stroke="#00e000" stroke-width="0.35" font-family="Liberation Sans" transform="translate(378.0 222) scale(0.8 1) translate(-378.0 -222)">2300</text>
<circle cx="387.2" cy="224.2" r="1.2" fill="#2ee82e"/>
<text x="404.2" y="222.5" font-size="6" font-weight="bold" text-anchor="middle" fill="#00e000" stroke="#00e000" stroke-width="0.35" font-family="Liberation Sans" transform="translate(404.2 222) scale(0.8 1) translate(-404.2 -222)">4300</text>
<circle cx="421.3" cy="224.2" r="1.2" fill="#2ee82e"/>
<text x="430.8" y="222.5" font-size="5" font-weight="bold" text-anchor="middle" fill="#00e000" stroke="#00e000" stroke-width="0.35" font-family="Liberation Sans" transform="translate(430.8 222) scale(0.8 1) translate(-430.8 -222)">2400</text>
<circle cx="440.3" cy="224.2" r="1.2" fill="#2ee82e"/>
<text x="449.4" y="222.5" font-size="5" font-weight="bold" text-anchor="middle" fill="#00e000" stroke="#00e000" stroke-width="0.35" font-family="Liberation Sans" transform="translate(449.4 222) scale(0.8 1) translate(-449.4 -222)">2300</text>
<circle cx="458.5" cy="224.2" r="1.2" fill="#2ee82e"/>
<circle cx="466.6" cy="224.2" r="1.2" fill="#2ee82e"/>
<text x="482.5" y="222.5" font-size="6" font-weight="bold" text-anchor="middle" fill="#00e000" stroke="#00e000" stroke-width="0.35" font-family="Liberation Sans" transform="translate(482.5 222) scale(0.8 1) translate(-482.5 -222)">4000</text>
<circle cx="498.3" cy="224.2" r="1.2" fill="#2ee82e"/>
<text x="512.1" y="222.5" font-size="6" font-weight="bold" text-anchor="middle" fill="#00e000" stroke="#00e000" stroke-width="0.35" font-family="Liberation Sans" transform="translate(512.1 222) scale(0.8 1) translate(-512.1 -222)">3500</text>
<circle cx="526" cy="224.2" r="1.2" fill="#2ee82e"/>
<text x="541.0" y="222.5" font-size="6" font-weight="bold" text-anchor="middle" fill="#00e000" stroke="#00e000" stroke-width="0.35" font-family="Liberation Sans" transform="translate(541.0 222) scale(0.8 1) translate(-541.0 -222)">3800</text>
<circle cx="556" cy="224.2" r="1.2" fill="#2ee82e"/>
<text x="567.2" y="222.5" font-size="6" font-weight="bold" text-anchor="middle" fill="#00e000" stroke="#00e000" stroke-width="0.35" font-family="Liberation Sans" transform="translate(567.2 222) scale(0.8 1) translate(-567.2 -222)">2850</text>
<circle cx="578.5" cy="224.2" r="1.2" fill="#2ee82e"/>
<text x="589.5" y="222.5" font-size="6" font-weight="bold" text-anchor="middle" fill="#00e000" stroke="#00e000" stroke-width="0.35" font-family="Liberation Sans" transform="translate(589.5 222) scale(0.8 1) translate(-589.5 -222)">2750</text>
<circle cx="600.5" cy="224.2" r="1.2" fill="#2ee82e"/>
<text x="616.0" y="222.5" font-size="6" font-weight="bold" text-anchor="middle" fill="#00e000" stroke="#00e000" stroke-width="0.35" font-family="Liberation Sans" transform="translate(616.0 222) scale(0.8 1) translate(-616.0 -222)">3900</text>
<circle cx="631.4" cy="224.2" r="1.2" fill="#2ee82e"/>
<text x="651.0" y="222.5" font-size="6" font-weight="bold" text-anchor="middle" fill="#00e000" stroke="#00e000" stroke-width="0.35" font-family="Liberation Sans" transform="translate(651.0 222) scale(0.8 1) translate(-651.0 -222)">4950</text>
<circle cx="670.7" cy="224.2" r="1.2" fill="#2ee82e"/>
<text x="703.6" y="222.5" font-size="6" font-weight="bold" text-anchor="middle" fill="#00e000" stroke="#00e000" stroke-width="0.35" font-family="Liberation Sans" transform="translate(703.6 222) scale(0.8 1) translate(-703.6 -222)">8300</text>
<circle cx="736.5" cy="224.2" r="1.2" fill="#2ee82e"/>
<text x="762.9" y="222.5" font-size="6" font-weight="bold" text-anchor="middle" fill="#00e000" stroke="#00e000" stroke-width="0.35" font-family="Liberation Sans" transform="translate(762.9 222) scale(0.8 1) translate(-762.9 -222)">6650</text>
<circle cx="789.3" cy="224.2" r="1.2" fill="#2ee82e"/>
<text x="815.5" y="222.5" font-size="6" font-weight="bold" text-anchor="middle" fill="#00e000" stroke="#00e000" stroke-width="0.35" font-family="Liberation Sans" transform="translate(815.5 222) scale(0.8 1) translate(-815.5 -222)">6600</text>
<circle cx="841.8" cy="224.2" r="1.2" fill="#2ee82e"/>
<text x="848.5" y="222.5" font-size="5" font-weight="bold" text-anchor="middle" fill="#00e000" stroke="#00e000" stroke-width="0.35" font-family="Liberation Sans" transform="translate(848.5 222) scale(0.8 1) translate(-848.5 -222)">1700</text>
<circle cx="855.1" cy="224.2" r="1.2" fill="#2ee82e"/>
<text x="874.8" y="222.5" font-size="6" font-weight="bold" text-anchor="middle" fill="#00e000" stroke="#00e000" stroke-width="0.35" font-family="Liberation Sans" transform="translate(874.8 222) scale(0.8 1) translate(-874.8 -222)">4950</text>
<circle cx="894.4" cy="224.2" r="1.2" fill="#2ee82e"/>
<text x="920.7" y="222.5" font-size="6" font-weight="bold" text-anchor="middle" fill="#00e000" stroke="#00e000" stroke-width="0.35" font-family="Liberation Sans" transform="translate(920.7 222) scale(0.8 1) translate(-920.7 -222)">6650</text>
<circle cx="947" cy="224.2" r="1.2" fill="#2ee82e"/>
<text x="964.7" y="222.5" font-size="6" font-weight="bold" text-anchor="middle" fill="#00e000" stroke="#00e000" stroke-width="0.35" font-family="Liberation Sans" transform="translate(964.7 222) scale(0.8 1) translate(-964.7 -222)">4450</text>
<text x="248" y="262.8" font-size="6" font-weight="bold" text-anchor="middle" fill="#00e000" stroke="#00e000" stroke-width="0.3" font-family="Liberation Sans" transform="rotate(-90 248 262.8) translate(248 262.8) scale(0.8 1) translate(-248 -262.8)">4750</text>
<circle cx="249" cy="244" r="1.2" fill="#00e000"/>
<text x="248" y="291.1" font-size="6" font-weight="bold" text-anchor="middle" fill="#00e000" stroke="#00e000" stroke-width="0.3" font-family="Liberation Sans" transform="rotate(-90 248 291.1) translate(248 291.1) scale(0.8 1) translate(-248 -291.1)">2400</text>
<circle cx="249" cy="281.6" r="1.2" fill="#00e000"/>
<text x="248" y="310.5" font-size="6" font-weight="bold" text-anchor="middle" fill="#00e000" stroke="#00e000" stroke-width="0.3" font-family="Liberation Sans" transform="rotate(-90 248 310.5) translate(248 310.5) scale(0.8 1) translate(-248 -310.5)">2500</text>
<circle cx="249" cy="300.6" r="1.2" fill="#00e000"/>
<text x="248" y="343.2" font-size="6" font-weight="bold" text-anchor="middle" fill="#00e000" stroke="#00e000" stroke-width="0.3" font-family="Liberation Sans" transform="rotate(-90 248 343.2) translate(248 343.2) scale(0.8 1) translate(-248 -343.2)">5750</text>
<circle cx="249" cy="320.4" r="1.2" fill="#00e000"/>
<text x="248" y="372.7" font-size="6" font-weight="bold" text-anchor="middle" fill="#00e000" stroke="#00e000" stroke-width="0.3" font-family="Liberation Sans" transform="rotate(-90 248 372.7) translate(248 372.7) scale(0.8 1) translate(-248 -372.7)">1700</text>
<circle cx="249" cy="366" r="1.2" fill="#00e000"/>
<text x="248" y="399.6" font-size="6" font-weight="bold" text-anchor="middle" fill="#00e000" stroke="#00e000" stroke-width="0.3" font-family="Liberation Sans" transform="rotate(-90 248 399.6) translate(248 399.6) scale(0.8 1) translate(-248 -399.6)">5100</text>
<circle cx="249" cy="379.4" r="1.2" fill="#00e000"/>
<text x="248" y="439.1" font-size="6" font-weight="bold" text-anchor="middle" fill="#00e000" stroke="#00e000" stroke-width="0.3" font-family="Liberation Sans" transform="rotate(-90 248 439.1) translate(248 439.1) scale(0.8 1) translate(-248 -439.1)">4875</text>
<circle cx="249" cy="419.8" r="1.2" fill="#00e000"/>
<text x="248" y="478.6" font-size="6" font-weight="bold" text-anchor="middle" fill="#00e000" stroke="#00e000" stroke-width="0.3" font-family="Liberation Sans" transform="rotate(-90 248 478.6) translate(248 478.6) scale(0.8 1) translate(-248 -478.6)">5075</text>
<circle cx="249" cy="458.5" r="1.2" fill="#00e000"/>
<text x="248" y="511.5" font-size="6" font-weight="bold" text-anchor="middle" fill="#00e000" stroke="#00e000" stroke-width="0.3" font-family="Liberation Sans" transform="rotate(-90 248 511.5) translate(248 511.5) scale(0.8 1) translate(-248 -511.5)">3225</text>
<circle cx="249" cy="498.8" r="1.2" fill="#00e000"/>
<text x="248" y="540.6" font-size="6" font-weight="bold" text-anchor="middle" fill="#00e000" stroke="#00e000" stroke-width="0.3" font-family="Liberation Sans" transform="rotate(-90 248 540.6) translate(248 540.6) scale(0.8 1) translate(-248 -540.6)">4125</text>
<circle cx="249" cy="524.3" r="1.2" fill="#00e000"/>
<text x="248" y="567.0" font-size="6" font-weight="bold" text-anchor="middle" fill="#00e000" stroke="#00e000" stroke-width="0.3" font-family="Liberation Sans" transform="rotate(-90 248 567.0) translate(248 567.0) scale(0.8 1) translate(-248 -567.0)">2525</text>
<circle cx="249" cy="557" r="1.2" fill="#00e000"/>
<text x="248" y="590.0" font-size="6" font-weight="bold" text-anchor="middle" fill="#00e000" stroke="#00e000" stroke-width="0.3" font-family="Liberation Sans" transform="rotate(-90 248 590.0) translate(248 590.0) scale(0.8 1) translate(-248 -590.0)">3275</text>
<circle cx="249" cy="577" r="1.2" fill="#00e000"/>
<text x="248" y="616.0" font-size="6" font-weight="bold" text-anchor="middle" fill="#00e000" stroke="#00e000" stroke-width="0.3" font-family="Liberation Sans" transform="rotate(-90 248 616.0) translate(248 616.0) scale(0.8 1) translate(-248 -616.0)">3275</text>
<circle cx="249" cy="603" r="1.2" fill="#00e000"/>
<text x="248" y="642.5" font-size="6" font-weight="bold" text-anchor="middle" fill="#00e000" stroke="#00e000" stroke-width="0.3" font-family="Liberation Sans" transform="rotate(-90 248 642.5) translate(248 642.5) scale(0.8 1) translate(-248 -642.5)">3400</text>
<circle cx="249" cy="629" r="1.2" fill="#00e000"/>
<text x="248" y="669.0" font-size="6" font-weight="bold" text-anchor="middle" fill="#00e000" stroke="#00e000" stroke-width="0.3" font-family="Liberation Sans" transform="rotate(-90 248 669.0) translate(248 669.0) scale(0.8 1) translate(-248 -669.0)">3275</text>
<circle cx="249" cy="656" r="1.2" fill="#00e000"/>
<text x="248" y="692.5" font-size="6" font-weight="bold" text-anchor="middle" fill="#00e000" stroke="#00e000" stroke-width="0.3" font-family="Liberation Sans" transform="rotate(-90 248 692.5) translate(248 692.5) scale(0.8 1) translate(-248 -692.5)">2650</text>
<circle cx="249" cy="682" r="1.2" fill="#00e000"/>
<text x="248" y="745.0" font-size="6" font-weight="bold" text-anchor="middle" fill="#00e000" stroke="#00e000" stroke-width="0.3" font-family="Liberation Sans" transform="rotate(-90 248 745.0) translate(248 745.0) scale(0.8 1) translate(-248 -745.0)">10575</text>
<circle cx="249" cy="703" r="1.2" fill="#00e000"/>
<circle cx="1118.4" cy="281.6" r="1.2" fill="#2ee82e"/>
<path d="M1098 281.6H1118" stroke="#555" stroke-width="1.2"/>
<circle cx="1118.4" cy="300.6" r="1.2" fill="#2ee82e"/>
<path d="M1098 300.6H1118" stroke="#555" stroke-width="1.2"/>
<circle cx="1118.4" cy="320.4" r="1.2" fill="#2ee82e"/>
<path d="M1098 320.4H1118" stroke="#555" stroke-width="1.2"/>
<circle cx="1118.4" cy="347" r="1.2" fill="#2ee82e"/>
<path d="M1098 347H1118" stroke="#555" stroke-width="1.2"/>
<circle cx="1118.4" cy="379.4" r="1.2" fill="#2ee82e"/>
<path d="M1098 379.4H1118" stroke="#555" stroke-width="1.2"/>
<circle cx="1118.4" cy="419.8" r="1.2" fill="#2ee82e"/>
<path d="M1098 419.8H1118" stroke="#555" stroke-width="1.2"/>
<circle cx="1118.4" cy="458.5" r="1.2" fill="#2ee82e"/>
<path d="M1098 458.5H1118" stroke="#555" stroke-width="1.2"/>
<circle cx="1118.4" cy="498.8" r="1.2" fill="#2ee82e"/>
<path d="M1098 498.8H1118" stroke="#555" stroke-width="1.2"/>
<circle cx="1118.4" cy="524.3" r="1.2" fill="#2ee82e"/>
<path d="M1098 524.3H1118" stroke="#555" stroke-width="1.2"/>
<circle cx="1118.4" cy="557" r="1.2" fill="#2ee82e"/>
<path d="M1098 557H1118" stroke="#555" stroke-width="1.2"/>
<circle cx="1118.4" cy="577" r="1.2" fill="#2ee82e"/>
<path d="M1098 577H1118" stroke="#555" stroke-width="1.2"/>
<circle cx="1118.4" cy="603" r="1.2" fill="#2ee82e"/>
<path d="M1098 603H1118" stroke="#555" stroke-width="1.2"/>
<circle cx="1118.4" cy="629" r="1.2" fill="#2ee82e"/>
<path d="M1098 629H1118" stroke="#555" stroke-width="1.2"/>
<circle cx="1118.4" cy="656" r="1.2" fill="#2ee82e"/>
<path d="M1098 656H1118" stroke="#555" stroke-width="1.2"/>
<circle cx="1118.4" cy="682" r="1.2" fill="#2ee82e"/>
<path d="M1098 682H1118" stroke="#555" stroke-width="1.2"/>
<circle cx="1118.4" cy="703" r="1.2" fill="#2ee82e"/>
<path d="M1098 703H1118" stroke="#555" stroke-width="1.2"/>
<circle cx="1118.4" cy="787" r="1.2" fill="#2ee82e"/>
<path d="M1098 787H1118" stroke="#555" stroke-width="1.2"/>
<text x="1116" y="291.1" font-size="5.5" font-weight="bold" text-anchor="middle" fill="#00e000" stroke="#00e000" stroke-width="0.3" font-family="Liberation Sans" transform="rotate(-90 1116 291.1) translate(1116 291.1) scale(0.8 1) translate(-1116 -291.1)">2400</text>
<text x="1116" y="310.5" font-size="5.5" font-weight="bold" text-anchor="middle" fill="#00e000" stroke="#00e000" stroke-width="0.3" font-family="Liberation Sans" transform="rotate(-90 1116 310.5) translate(1116 310.5) scale(0.8 1) translate(-1116 -310.5)">2500</text>
<text x="1116" y="333.7" font-size="5.5" font-weight="bold" text-anchor="middle" fill="#00e000" stroke="#00e000" stroke-width="0.3" font-family="Liberation Sans" transform="rotate(-90 1116 333.7) translate(1116 333.7) scale(0.8 1) translate(-1116 -333.7)">3350</text>
<text x="1116" y="353.3" font-size="5.5" font-weight="bold" text-anchor="middle" fill="#00e000" stroke="#00e000" stroke-width="0.3" font-family="Liberation Sans" transform="rotate(-90 1116 353.3) translate(1116 353.3) scale(0.8 1) translate(-1116 -353.3)">1600</text>
<text x="1116" y="369.5" font-size="5.5" font-weight="bold" text-anchor="middle" fill="#00e000" stroke="#00e000" stroke-width="0.3" font-family="Liberation Sans" transform="rotate(-90 1116 369.5) translate(1116 369.5) scale(0.8 1) translate(-1116 -369.5)">2500</text>
<text x="1116" y="403.4" font-size="5.5" font-weight="bold" text-anchor="middle" fill="#00e000" stroke="#00e000" stroke-width="0.3" font-family="Liberation Sans" transform="rotate(-90 1116 403.4) translate(1116 403.4) scale(0.8 1) translate(-1116 -403.4)">4125</text>
<text x="1116" y="439.1" font-size="5.5" font-weight="bold" text-anchor="middle" fill="#00e000" stroke="#00e000" stroke-width="0.3" font-family="Liberation Sans" transform="rotate(-90 1116 439.1) translate(1116 439.1) scale(0.8 1) translate(-1116 -439.1)">4875</text>
<text x="1116" y="465.1" font-size="5.5" font-weight="bold" text-anchor="middle" fill="#00e000" stroke="#00e000" stroke-width="0.3" font-family="Liberation Sans" transform="rotate(-90 1116 465.1) translate(1116 465.1) scale(0.8 1) translate(-1116 -465.1)">1650</text>
<text x="1116" y="485.2" font-size="5.5" font-weight="bold" text-anchor="middle" fill="#00e000" stroke="#00e000" stroke-width="0.3" font-family="Liberation Sans" transform="rotate(-90 1116 485.2) translate(1116 485.2) scale(0.8 1) translate(-1116 -485.2)">3425</text>
<text x="1116" y="511.5" font-size="5.5" font-weight="bold" text-anchor="middle" fill="#00e000" stroke="#00e000" stroke-width="0.3" font-family="Liberation Sans" transform="rotate(-90 1116 511.5) translate(1116 511.5) scale(0.8 1) translate(-1116 -511.5)">3225</text>
<text x="1116" y="540.6" font-size="5.5" font-weight="bold" text-anchor="middle" fill="#00e000" stroke="#00e000" stroke-width="0.3" font-family="Liberation Sans" transform="rotate(-90 1116 540.6) translate(1116 540.6) scale(0.8 1) translate(-1116 -540.6)">4125</text>
<text x="1116" y="567.0" font-size="5.5" font-weight="bold" text-anchor="middle" fill="#00e000" stroke="#00e000" stroke-width="0.3" font-family="Liberation Sans" transform="rotate(-90 1116 567.0) translate(1116 567.0) scale(0.8 1) translate(-1116 -567.0)">2525</text>
<text x="1116" y="590.0" font-size="5.5" font-weight="bold" text-anchor="middle" fill="#00e000" stroke="#00e000" stroke-width="0.3" font-family="Liberation Sans" transform="rotate(-90 1116 590.0) translate(1116 590.0) scale(0.8 1) translate(-1116 -590.0)">3275</text>
<text x="1116" y="616.0" font-size="5.5" font-weight="bold" text-anchor="middle" fill="#00e000" stroke="#00e000" stroke-width="0.3" font-family="Liberation Sans" transform="rotate(-90 1116 616.0) translate(1116 616.0) scale(0.8 1) translate(-1116 -616.0)">3275</text>
<text x="1116" y="642.5" font-size="5.5" font-weight="bold" text-anchor="middle" fill="#00e000" stroke="#00e000" stroke-width="0.3" font-family="Liberation Sans" transform="rotate(-90 1116 642.5) translate(1116 642.5) scale(0.8 1) translate(-1116 -642.5)">3400</text>
<text x="1116" y="669.0" font-size="5.5" font-weight="bold" text-anchor="middle" fill="#00e000" stroke="#00e000" stroke-width="0.3" font-family="Liberation Sans" transform="rotate(-90 1116 669.0) translate(1116 669.0) scale(0.8 1) translate(-1116 -669.0)">3275</text>
<text x="1116" y="696.0" font-size="5.5" font-weight="bold" text-anchor="middle" fill="#00e000" stroke="#00e000" stroke-width="0.3" font-family="Liberation Sans" transform="rotate(-90 1116 696.0) translate(1116 696.0) scale(0.8 1) translate(-1116 -696.0)">1775</text>
<text x="1116" y="709.0" font-size="5.5" font-weight="bold" text-anchor="middle" fill="#00e000" stroke="#00e000" stroke-width="0.3" font-family="Liberation Sans" transform="rotate(-90 1116 709.0) translate(1116 709.0) scale(0.8 1) translate(-1116 -709.0)">1500</text>
<text x="1116" y="751.0" font-size="5.5" font-weight="bold" text-anchor="middle" fill="#00e000" stroke="#00e000" stroke-width="0.3" font-family="Liberation Sans" transform="rotate(-90 1116 751.0) translate(1116 751.0) scale(0.8 1) translate(-1116 -751.0)">9075</text>
<g fill="#30e030" opacity="0.55"><rect x="1102" y="325" width="2" height="22"/><rect x="1102" y="422" width="2" height="36"/><rect x="1105" y="502" width="2" height="26"/><rect x="1105" y="660" width="2" height="22"/><rect x="1107" y="372" width="2" height="14"/></g>
<path d="M306 244L509 306.8L513.2 281.6H983L987 582.5L705.8 600V746L418 786.5L400.8 587.7L301 584L293 579L291 553L270 540L306 244" fill="none" stroke="#10f0f8" stroke-width="1.3" stroke-dasharray="4 1.8"/>
<path d="M261.5 583.2L360.3 586.5L354.5 761.9L255.7 759Z" fill="none" stroke="#10f0f8" stroke-width="1.3" stroke-dasharray="4 1.8"/>
<path d="M287.6 583V606.8H260.5" fill="none" stroke="#ff2a2a" stroke-width="1.2" stroke-dasharray="3.5 1.8"/>
<path d="M260.5 627.8H273.1L269.2 760" fill="none" stroke="#ff2a2a" stroke-width="1.2" stroke-dasharray="3.5 1.8"/>
<path d="M280.9 620H306L302.2 747.3H276L280.9 620M293.4 620L289.6 747" fill="none" stroke="#ff2a2a" stroke-width="1.2" stroke-dasharray="3.5 1.8"/>
<path d="M311.9 650.4H337.6L334.5 749.3H309L311.9 650.4M324.5 650.4L322 749.3" fill="none" stroke="#ff2a2a" stroke-width="1.2" stroke-dasharray="3.5 1.8"/>
<path d="M357.4 651.4H344.8L341.5 761.9" fill="none" stroke="#ff2a2a" stroke-width="1.2" stroke-dasharray="3.5 1.8"/>
<rect x="338" y="303.4" width="32.5" height="16.0" fill="#fff0f0" stroke="#ff2020" stroke-width="1.2"/>
<rect x="346.0" y="308" width="1.0" height="10.0" fill="#ff2020"/>
<rect x="348.2" y="308" width="1.0" height="10.0" fill="#ff2020"/>
<rect x="350.4" y="308" width="1.0" height="10.0" fill="#ff2020"/>
<rect x="352.6" y="308" width="1.0" height="10.0" fill="#ff2020"/>
<rect x="354.8" y="308" width="1.0" height="10.0" fill="#ff2020"/>
<rect x="357.0" y="308" width="1.0" height="10.0" fill="#ff2020"/>
<rect x="359.2" y="308" width="1.0" height="10.0" fill="#ff2020"/>
<rect x="361.4" y="308" width="1.0" height="10.0" fill="#ff2020"/>
<rect x="363.6" y="308" width="1.0" height="10.0" fill="#ff2020"/>
<rect x="345" y="311" width="20.0" height="3.0" fill="#ff2020"/>
<path d="M316.8 319L316.8 312L338 312" fill="none" stroke="#ffee00" stroke-width="1.2"/>
<path d="M370.5 312L454.2 312L454.2 319" fill="none" stroke="#ffee00" stroke-width="1.2"/>
<rect x="380.8" y="315" width="29.7" height="4.3" fill="#fff" stroke="#ff2020" stroke-width="1.3"/>
<rect x="422" y="315" width="31.0" height="4.3" fill="#fff" stroke="#ff2020" stroke-width="1.3"/>
<path d="M311 319.5L459.5 319.5" fill="none" stroke="#2ee82e" stroke-width="1.6"/>
<rect x="413.0" y="304.5" width="13" height="4.5" fill="#fff" stroke="#ff10ff" stroke-width="1.1"/>
<path d="M415.0 306.7h9" stroke="#00e000" stroke-width="2" stroke-dasharray="2 0.6"/>
<rect x="430.0" y="304.5" width="13" height="4.5" fill="#fff" stroke="#ff10ff" stroke-width="1.1"/>
<path d="M432.0 306.7h9" stroke="#00e000" stroke-width="2" stroke-dasharray="2 0.6"/>
<rect x="370.0" y="324.0" width="13" height="4.5" fill="#fff" stroke="#ff10ff" stroke-width="1.1"/>
<path d="M372.0 326.2h9" stroke="#00e000" stroke-width="2" stroke-dasharray="2 0.6"/>
<rect x="321" y="313" width="2.0" height="3.0" fill="#ff10ff"/>
<rect x="333" y="313" width="2.0" height="3.0" fill="#ff10ff"/>
<rect x="369" y="313" width="2.0" height="3.0" fill="#ff10ff"/>
<rect x="375" y="313" width="2.0" height="3.0" fill="#ff10ff"/>
<rect x="404" y="313" width="2.0" height="3.0" fill="#ff10ff"/>
<rect x="410" y="313" width="2.0" height="3.0" fill="#ff10ff"/>
<rect x="315.8" y="333.4" width="106.5" height="46.0" fill="none" stroke="#ff2020" stroke-width="1.4"/>
<path d="M342.4 349L342.4 379" fill="none" stroke="#2ee82e" stroke-width="1.6"/>
<path d="M368.6 333.4L368.6 379" fill="none" stroke="#ff2020" stroke-width="1.4"/>
<path d="M395.2 349L395.2 379" fill="none" stroke="#2ee82e" stroke-width="1.4"/>
<rect x="327" y="330.5" width="31.4" height="18.5" fill="url(#bh)" stroke="#7aa030" stroke-width="0.8"/>
<path d="M342.7 330.5V349" stroke="#e8d030" stroke-width="0.9"/>
<rect x="379.7" y="330.5" width="31.5" height="18.5" fill="url(#bh)" stroke="#7aa030" stroke-width="0.8"/>
<path d="M395.4 330.5V349" stroke="#e8d030" stroke-width="0.9"/>
<path d="M459.5 319L459.5 380" fill="none" stroke="#2ee82e" stroke-width="1.6"/>
<path d="M422.3 379.4L459.5 379.4" fill="none" stroke="#2ee82e" stroke-width="1.2"/>
<rect x="426" y="339" width="14.0" height="21.0" fill="#ffd8d8" stroke="#ff6060" stroke-width="1"/>
<rect x="427" y="341" width="12.0" height="1.0" fill="#ff5050"/>
<rect x="427" y="344" width="12.0" height="1.0" fill="#ff5050"/>
<rect x="427" y="347" width="12.0" height="1.0" fill="#ff5050"/>
<rect x="427" y="350" width="12.0" height="1.0" fill="#ff5050"/>
<rect x="427" y="353" width="12.0" height="1.0" fill="#ff5050"/>
<rect x="427" y="356" width="12.0" height="1.0" fill="#ff5050"/>
<rect x="426.0" y="369.0" width="13" height="4.5" fill="#fff" stroke="#ff10ff" stroke-width="1.1"/>
<path d="M428.0 371.2h9" stroke="#00e000" stroke-width="2" stroke-dasharray="2 0.6"/>
<rect x="323" y="380" width="14.0" height="8.0" fill="#fde8e8" stroke="#f08080" stroke-width="1"/>
<path d="M325 386L326 382L334 382L335 386" fill="none" stroke="#ff10ff" stroke-width="1"/>
<rect x="349" y="380" width="14.0" height="8.0" fill="#fde8e8" stroke="#f08080" stroke-width="1"/>
<path d="M351 386L352 382L360 382L361 386" fill="none" stroke="#ff10ff" stroke-width="1"/>
<rect x="375" y="380" width="14.0" height="8.0" fill="#fde8e8" stroke="#f08080" stroke-width="1"/>
<path d="M377 386L378 382L386 382L387 386" fill="none" stroke="#ff10ff" stroke-width="1"/>
<rect x="401" y="380" width="14.0" height="8.0" fill="#fde8e8" stroke="#f08080" stroke-width="1"/>
<path d="M403 386L404 382L412 382L413 386" fill="none" stroke="#ff10ff" stroke-width="1"/>
<path d="M323.0 358.5h12" stroke="#00e000" stroke-width="2" stroke-dasharray="1.6 0.6"/>
<rect x="322.5" y="361.0" width="13" height="4.5" fill="#fff" stroke="#ff10ff" stroke-width="1.1"/>
<path d="M324.5 363.2h9" stroke="#00e000" stroke-width="2" stroke-dasharray="1.6 0.6"/>
<path d="M349.0 358.5h12" stroke="#00e000" stroke-width="2" stroke-dasharray="1.6 0.6"/>
<rect x="348.5" y="361.0" width="13" height="4.5" fill="#fff" stroke="#ff10ff" stroke-width="1.1"/>
<path d="M350.5 363.2h9" stroke="#00e000" stroke-width="2" stroke-dasharray="1.6 0.6"/>
<path d="M375.0 358.5h12" stroke="#00e000" stroke-width="2" stroke-dasharray="1.6 0.6"/>
<rect x="374.5" y="361.0" width="13" height="4.5" fill="#fff" stroke="#ff10ff" stroke-width="1.1"/>
<path d="M376.5 363.2h9" stroke="#00e000" stroke-width="2" stroke-dasharray="1.6 0.6"/>
<path d="M401.0 358.5h12" stroke="#00e000" stroke-width="2" stroke-dasharray="1.6 0.6"/>
<rect x="400.5" y="361.0" width="13" height="4.5" fill="#fff" stroke="#ff10ff" stroke-width="1.1"/>
<path d="M402.5 363.2h9" stroke="#00e000" stroke-width="2" stroke-dasharray="1.6 0.6"/>
<rect x="310" y="319" width="5.8" height="22.0" fill="none" stroke="#2ee82e" stroke-width="1.2"/>
<rect x="314.5" y="317.5" width="3.0" height="5.0" fill="#2a2ae0"/>
<rect x="335.5" y="317.5" width="3.0" height="5.0" fill="#2a2ae0"/>
<rect x="369.5" y="317.5" width="3.0" height="5.0" fill="#2a2ae0"/>
<rect x="420.5" y="317.5" width="3.0" height="5.0" fill="#2a2ae0"/>
<rect x="457.5" y="317.5" width="3.0" height="5.0" fill="#2a2ae0"/>
<rect x="457.5" y="342.5" width="3.0" height="5.0" fill="#2a2ae0"/>
<rect x="420.5" y="342.5" width="3.0" height="5.0" fill="#2a2ae0"/>
<rect x="314.5" y="342.5" width="3.0" height="5.0" fill="#2a2ae0"/>
<path d="M458.8 351L458.8 359" fill="none" stroke="#2ee82e" stroke-width="1.4"/>
<path d="M459 352.1L618 352.1" fill="none" stroke="#ffee00" stroke-width="1.4"/>
<path d="M459 359L618 359" fill="none" stroke="#2ee82e" stroke-width="1.4"/>
<rect x="537.4" y="355" width="30.2" height="4.0" fill="#fff" stroke="#ff2020" stroke-width="1.3"/>
<rect x="590" y="355" width="28.0" height="4.0" fill="#fff" stroke="#ff2020" stroke-width="1.3"/>
<rect x="512.0" y="345.7" width="13" height="4.5" fill="#fff" stroke="#ff10ff" stroke-width="1.1"/>
<path d="M514.0 347.9h9" stroke="#00e000" stroke-width="2" stroke-dasharray="2 0.6"/>
<rect x="570.0" y="344.0" width="13" height="4.5" fill="#fff" stroke="#ff10ff" stroke-width="1.1"/>
<path d="M572.0 346.2h9" stroke="#00e000" stroke-width="2" stroke-dasharray="2 0.6"/>
<rect x="572.5" y="364.0" width="13" height="4.5" fill="#fff" stroke="#ff10ff" stroke-width="1.1"/>
<path d="M574.5 366.2h9" stroke="#00e000" stroke-width="2" stroke-dasharray="2 0.6"/>
<path d="M459 374.5L526 374.5" fill="none" stroke="#2ee82e" stroke-width="1.4"/>
<path d="M459 381L526 381" fill="none" stroke="#ffee00" stroke-width="1.2"/>
<path d="M453.5 380L453.5 420" fill="none" stroke="#ff2020" stroke-width="1.4"/>
<rect x="454" y="388" width="7.0" height="22.0" fill="none" stroke="#ffee00" stroke-width="1"/>
<rect x="524.5" y="356.5" width="3.0" height="5.0" fill="#2a2ae0"/>
<rect x="577.3" y="356.5" width="3.0" height="5.0" fill="#2a2ae0"/>
<rect x="524.5" y="372.0" width="3.0" height="5.0" fill="#2a2ae0"/>
<rect x="457.5" y="379.5" width="3.0" height="5.0" fill="#2a2ae0"/>
<path d="M526 372.5L668 372.5" fill="none" stroke="#ff2020" stroke-width="1.4"/>
<path d="M526 372.5L526 418.8" fill="none" stroke="#2ee82e" stroke-width="1.4"/>
<path d="M552.5 372.5L552.5 418.8" fill="none" stroke="#2ee82e" stroke-width="1.4"/>
<path d="M578.8 372.5L578.8 418.8" fill="none" stroke="#ff2020" stroke-width="1.4"/>
<path d="M605.3 372.5L605.3 418.8" fill="none" stroke="#2ee82e" stroke-width="1.4"/>
<path d="M631.8 372.5L631.8 418.8" fill="none" stroke="#ff2020" stroke-width="1.4"/>
<path d="M657.5 372.5L657.5 418.8" fill="none" stroke="#2ee82e" stroke-width="1.4"/>
<path d="M526 418.8L671 418.8" fill="none" stroke="#ff2020" stroke-width="1.4"/>
<rect x="536.8" y="370.4" width="31.4" height="17.6" fill="url(#bh)" stroke="#7aa030" stroke-width="0.8"/>
<path d="M552.5 370.4V388" stroke="#e8d030" stroke-width="0.9"/>
<rect x="589.6" y="370.4" width="30.8" height="17.6" fill="url(#bh)" stroke="#7aa030" stroke-width="0.8"/>
<path d="M605.0 370.4V388" stroke="#e8d030" stroke-width="0.9"/>
<rect x="642.5" y="370.4" width="15.7" height="17.6" fill="url(#bh)" stroke="#7aa030" stroke-width="0.8"/>
<path d="M533.0 397.5h12" stroke="#00e000" stroke-width="2" stroke-dasharray="1.6 0.6"/>
<rect x="532.5" y="400.0" width="13" height="4.5" fill="#fff" stroke="#ff10ff" stroke-width="1.1"/>
<path d="M534.5 402.2h9" stroke="#00e000" stroke-width="2" stroke-dasharray="1.6 0.6"/>
<path d="M559.0 397.5h12" stroke="#00e000" stroke-width="2" stroke-dasharray="1.6 0.6"/>
<rect x="558.5" y="400.0" width="13" height="4.5" fill="#fff" stroke="#ff10ff" stroke-width="1.1"/>
<path d="M560.5 402.2h9" stroke="#00e000" stroke-width="2" stroke-dasharray="1.6 0.6"/>
<path d="M585.0 397.5h12" stroke="#00e000" stroke-width="2" stroke-dasharray="1.6 0.6"/>
<rect x="584.5" y="400.0" width="13" height="4.5" fill="#fff" stroke="#ff10ff" stroke-width="1.1"/>
<path d="M586.5 402.2h9" stroke="#00e000" stroke-width="2" stroke-dasharray="1.6 0.6"/>
<path d="M612.0 397.5h12" stroke="#00e000" stroke-width="2" stroke-dasharray="1.6 0.6"/>
<rect x="611.5" y="400.0" width="13" height="4.5" fill="#fff" stroke="#ff10ff" stroke-width="1.1"/>
<path d="M613.5 402.2h9" stroke="#00e000" stroke-width="2" stroke-dasharray="1.6 0.6"/>
<path d="M638.0 397.5h12" stroke="#00e000" stroke-width="2" stroke-dasharray="1.6 0.6"/>
<rect x="637.5" y="400.0" width="13" height="4.5" fill="#fff" stroke="#ff10ff" stroke-width="1.1"/>
<path d="M639.5 402.2h9" stroke="#00e000" stroke-width="2" stroke-dasharray="1.6 0.6"/>
<rect x="532" y="419" width="14.0" height="9.0" fill="#fdeaea" stroke="#2ee82e" stroke-width="1.2"/>
<rect x="558" y="425" width="14.0" height="9.0" fill="#fdeaea" stroke="#2ee82e" stroke-width="1.2"/>
<rect x="584" y="425" width="14.0" height="9.0" fill="#fdeaea" stroke="#2ee82e" stroke-width="1.2"/>
<rect x="611" y="419" width="14.0" height="9.0" fill="#fdeaea" stroke="#2ee82e" stroke-width="1.2"/>
<rect x="637" y="419" width="14.0" height="9.0" fill="#fdeaea" stroke="#2ee82e" stroke-width="1.2"/>
<path d="M658 383L664 418L670 383" fill="none" stroke="#ff2020" stroke-width="1.3"/>
<rect x="658" y="383" width="12.7" height="35.8" fill="none" stroke="#ff2020" stroke-width="1"/>
<rect x="524.5" y="381.5" width="3.0" height="5.0" fill="#2a2ae0"/>
<rect x="577.3" y="381.5" width="3.0" height="5.0" fill="#2a2ae0"/>
<rect x="630.3" y="381.5" width="3.0" height="5.0" fill="#2a2ae0"/>
<rect x="669.2" y="381.5" width="3.0" height="5.0" fill="#2a2ae0"/>
<rect x="524.5" y="415.5" width="3.0" height="5.0" fill="#2a2ae0"/>
<rect x="577.3" y="415.5" width="3.0" height="5.0" fill="#2a2ae0"/>
<rect x="630.3" y="415.5" width="3.0" height="5.0" fill="#2a2ae0"/>
<rect x="669.2" y="415.5" width="3.0" height="5.0" fill="#2a2ae0"/>
<rect x="617.7" y="324.5" width="53.3" height="34.5" fill="none" stroke="#2ee82e" stroke-width="1.4"/>
<path d="M617.7 323L668 323" fill="none" stroke="#ff2020" stroke-width="1.2"/>
<rect x="636" y="325" width="21.5" height="17.0" fill="#ddd" stroke="#ff4040" stroke-width="1.2"/>
<rect x="639" y="327" width="15.0" height="13.0" fill="#c8c8c8" stroke="#888" stroke-width="1.2"/>
<path d="M641 329L652 338" fill="none" stroke="#fff" stroke-width="1"/>
<path d="M652 329L641 338" fill="none" stroke="#fff" stroke-width="1"/>
<rect x="632" y="343" width="22.0" height="15.0" fill="#ffe0e0" stroke="#ff2020" stroke-width="1.2"/>
<rect x="633.0" y="344" width="1.0" height="13.0" fill="#ff2020"/>
<rect x="635.3" y="344" width="1.0" height="13.0" fill="#ff2020"/>
<rect x="637.6" y="344" width="1.0" height="13.0" fill="#ff2020"/>
<rect x="639.9" y="344" width="1.0" height="13.0" fill="#ff2020"/>
<rect x="642.2" y="344" width="1.0" height="13.0" fill="#ff2020"/>
<rect x="644.5" y="344" width="1.0" height="13.0" fill="#ff2020"/>
<rect x="646.8" y="344" width="1.0" height="13.0" fill="#ff2020"/>
<rect x="649.1" y="344" width="1.0" height="13.0" fill="#ff2020"/>
<rect x="651.4" y="344" width="1.0" height="13.0" fill="#ff2020"/>
<rect x="657.5" y="325" width="13.5" height="15.0" fill="#f4e6e6" stroke="#999" stroke-width="1"/>
<g stroke="#aaa" stroke-width="0.8" fill="none"><path d="M658 327l3 3 3-3 3 3 3-3M658 336l3 3 3-3 3 3 3-3"/></g>
<rect x="657.5" y="342" width="13.5" height="16.0" fill="#e8ffe8" stroke="#2ee82e" stroke-width="1"/>
<path d="M670 323L670 298" fill="none" stroke="#2ee82e" stroke-width="1.4"/>
<path d="M671 298.4H855.3V426.3H820.9V447.5H671Z" fill="url(#rh)"/>
<path d="M671 426.3L820.9 426.3" fill="none" stroke="#a8a8a8" stroke-width="1.2"/>
<path d="M671 300L855.3 300" fill="none" stroke="#c87030" stroke-width="0.8"/>
<path d="M671 298.4L855.3 298.4L855.3 426.3L820.9 426.3L820.9 458.9L693.5 458.9" fill="none" stroke="#2ee82e" stroke-width="1.8"/>
<path d="M671 298.4L671 447.5" fill="none" stroke="#2ee82e" stroke-width="1.4"/>
<rect x="716.0" y="323" width="3.0" height="6.0" fill="#ff10ff"/>
<rect x="802.0" y="323" width="3.0" height="6.0" fill="#ff10ff"/>
<rect x="716.0" y="434" width="3.0" height="6.0" fill="#ff10ff"/>
<rect x="783.0" y="434" width="3.0" height="6.0" fill="#ff10ff"/>
<rect x="703.0" y="295" width="3.0" height="6.0" fill="#ff10ff"/>
<rect x="761.0" y="295" width="3.0" height="6.0" fill="#ff10ff"/>
<rect x="819.5" y="295" width="3.0" height="6.0" fill="#ff10ff"/>
<rect x="699.5" y="456" width="3.0" height="6.0" fill="#ff10ff"/>
<rect x="736.5" y="456" width="3.0" height="6.0" fill="#ff10ff"/>
<rect x="760.5" y="456" width="3.0" height="6.0" fill="#ff10ff"/>
<rect x="788.5" y="456" width="3.0" height="6.0" fill="#ff10ff"/>
<rect x="818.5" y="456" width="3.0" height="6.0" fill="#ff10ff"/>
<path d="M631.2 474H764V510.4H631.2Z" fill="url(#rh)"/>
<path d="M631.2 510.4H764V549.6H631.2Z" fill="url(#rh2)"/>
<path d="M631.2 510.4L764 510.4" fill="none" stroke="#2ee82e" stroke-width="1.4"/>
<path d="M631.2 457.5L631.2 549.6L764 549.6L764 458.9" fill="none" stroke="#2ee82e" stroke-width="1.8"/>
<path d="M694 458L764 458" fill="none" stroke="#2ee82e" stroke-width="1.4"/>
<rect x="637" y="457.5" width="40.0" height="40.5" fill="#fff"/>
<rect x="631.2" y="457.5" width="5.8" height="20.5" fill="#fff" stroke="#ff2020" stroke-width="1.3"/>
<path d="M637 457.5L677 457.5L677 498L637 498L637 457.5" fill="none" stroke="#2ee82e" stroke-width="1.1"/>
<rect x="638" y="459" width="10.0" height="39.0" fill="#fff0f0" stroke="#ff2020" stroke-width="1.1"/>
<rect x="639" y="462" width="8.0" height="1.0" fill="#ff4040"/>
<rect x="639" y="466" width="8.0" height="1.0" fill="#ff4040"/>
<rect x="639" y="470" width="8.0" height="1.0" fill="#ff4040"/>
<rect x="639" y="474" width="8.0" height="1.0" fill="#ff4040"/>
<rect x="639" y="478" width="8.0" height="1.0" fill="#ff4040"/>
<rect x="639" y="482" width="8.0" height="1.0" fill="#ff4040"/>
<rect x="639" y="486" width="8.0" height="1.0" fill="#ff4040"/>
<rect x="639" y="490" width="8.0" height="1.0" fill="#ff4040"/>
<rect x="639" y="494" width="8.0" height="1.0" fill="#ff4040"/>
<rect x="647" y="467" width="11.0" height="21.0" fill="#f8f8f8" stroke="#ff6060" stroke-width="1.1"/>
<path d="M649 471L656 484" fill="none" stroke="#555" stroke-width="0.8"/>
<path d="M656 471L649 484" fill="none" stroke="#555" stroke-width="0.8"/>
<path d="M650 458L650 466" fill="none" stroke="#ff2020" stroke-width="1"/>
<path d="M654 458L654 466" fill="none" stroke="#ff2020" stroke-width="1"/>
<path d="M651 488L651 498" fill="none" stroke="#ff2020" stroke-width="1"/>
<path d="M655 488L655 498" fill="none" stroke="#ff2020" stroke-width="1"/>
<rect x="677" y="468" width="16.0" height="18.0" fill="#ddd" stroke="#ff2020" stroke-width="1.6"/>
<rect x="680" y="471" width="10.0" height="12.0" fill="#d8d8d8" stroke="#666" stroke-width="1.2"/>
<rect x="627" y="506" width="4.0" height="9.0" fill="#fff"/>
<rect x="624" y="506" width="7.0" height="9.0" fill="none" stroke="#2ee82e" stroke-width="1.2"/>
<rect x="764" y="506" width="7.0" height="9.0" fill="#fff" stroke="#2ee82e" stroke-width="1.2"/>
<rect x="606.5" y="505.0" width="13" height="4.5" fill="#fff" stroke="#ff10ff" stroke-width="1.1"/>
<path d="M608.5 507.2h9" stroke="#00e000" stroke-width="2" stroke-dasharray="2 0.6"/>
<rect x="778.5" y="505.0" width="13" height="4.5" fill="#fff" stroke="#ff10ff" stroke-width="1.1"/>
<path d="M780.5 507.2h9" stroke="#00e000" stroke-width="2" stroke-dasharray="2 0.6"/>
<rect x="660.5" y="477.0" width="13" height="4.5" fill="#fff" stroke="#ff10ff" stroke-width="1.1"/>
<path d="M662.5 479.2h9" stroke="#00e000" stroke-width="2" stroke-dasharray="2 0.6"/>
<rect x="742.0" y="452.0" width="13" height="4.5" fill="#fff" stroke="#ff10ff" stroke-width="1.1"/>
<path d="M744.0 454.2h9" stroke="#00e000" stroke-width="2" stroke-dasharray="2 0.6"/>
<rect x="706.5" y="528" width="3.0" height="6.0" fill="#ff10ff"/>
<rect x="706.5" y="489" width="3.0" height="6.0" fill="#ff10ff"/>
<path d="M453.7 418.7L453.7 668" fill="none" stroke="#ff2020" stroke-width="1.5"/>
<path d="M439.3 473L439.3 702.6L466.9 702.6L466.9 715" fill="none" stroke="#2ee82e" stroke-width="1.5"/>
<path d="M453.7 418.7L500 418.7" fill="none" stroke="#2ee82e" stroke-width="1.4"/>
<rect x="453.7" y="418.7" width="46.3" height="53.0" fill="none" stroke="#ff2020" stroke-width="1.3"/>
<path d="M453.7 444.8L500 444.8" fill="none" stroke="#ff2020" stroke-width="1.3"/>
<path d="M500 418.7L500 471.7" fill="none" stroke="#2ee82e" stroke-width="1.4"/>
<path d="M453.7 497.6L506.4 497.6" fill="none" stroke="#ff2020" stroke-width="1.3"/>
<path d="M453.7 523.4L506.4 523.4" fill="none" stroke="#ff2020" stroke-width="1.3"/>
<path d="M453.7 550L506.4 550" fill="none" stroke="#ff2020" stroke-width="1.3"/>
<path d="M453.7 576.7L506.4 576.7" fill="none" stroke="#ff2020" stroke-width="1.3"/>
<path d="M453.7 603.3L506.4 603.3" fill="none" stroke="#ff2020" stroke-width="1.3"/>
<path d="M453.7 629L506.4 629" fill="none" stroke="#ff2020" stroke-width="1.3"/>
<path d="M453.7 471.7L506.4 471.7" fill="none" stroke="#2ee82e" stroke-width="1.3"/>
<path d="M506.4 471.7L506.4 629" fill="none" stroke="#2ee82e" stroke-width="1.5"/>
<path d="M500 629L500 655" fill="none" stroke="#2ee82e" stroke-width="1.4"/>
<rect x="450.8" y="430.3" width="18.2" height="31.0" fill="url(#bh)" stroke="#7aa030" stroke-width="0.8"/>
<path d="M450.8 445.8H469" stroke="#e8d030" stroke-width="0.9"/>
<rect x="450.8" y="482.6" width="18.2" height="31.0" fill="url(#bh)" stroke="#7aa030" stroke-width="0.8"/>
<path d="M450.8 498.1H469" stroke="#e8d030" stroke-width="0.9"/>
<rect x="450.8" y="535" width="18.2" height="31.0" fill="url(#bh)" stroke="#7aa030" stroke-width="0.8"/>
<path d="M450.8 550.5H469" stroke="#e8d030" stroke-width="0.9"/>
<rect x="450.8" y="587" width="18.2" height="31.0" fill="url(#bh)" stroke="#7aa030" stroke-width="0.8"/>
<path d="M450.8 602.5H469" stroke="#e8d030" stroke-width="0.9"/>
<rect x="450.8" y="640" width="18.2" height="16.0" fill="url(#bh)" stroke="#7aa030" stroke-width="0.8"/>
<rect x="450.8" y="550" width="18.2" height="16.0" fill="url(#bh)" stroke="#7aa030" stroke-width="0.8"/>
<rect x="500" y="425" width="7.0" height="12.0" fill="#fde8e8" stroke="#f08080" stroke-width="1"/>
<path d="M502 435L503 427L504 427L505 435" fill="none" stroke="#ff10ff" stroke-width="1"/>
<rect x="500" y="455" width="7.0" height="12.0" fill="#fde8e8" stroke="#f08080" stroke-width="1"/>
<path d="M502 465L503 457L504 457L505 465" fill="none" stroke="#ff10ff" stroke-width="1"/>
<rect x="506.4" y="478" width="7.1" height="12.0" fill="#fde8e8" stroke="#f08080" stroke-width="1"/>
<path d="M508.4 488L509.4 480L510.5 480L511.5 488" fill="none" stroke="#ff10ff" stroke-width="1"/>
<rect x="506.4" y="504" width="7.1" height="12.0" fill="#fde8e8" stroke="#f08080" stroke-width="1"/>
<path d="M508.4 514L509.4 506L510.5 506L511.5 514" fill="none" stroke="#ff10ff" stroke-width="1"/>
<rect x="506.4" y="530" width="7.1" height="12.0" fill="#fde8e8" stroke="#f08080" stroke-width="1"/>
<path d="M508.4 540L509.4 532L510.5 532L511.5 540" fill="none" stroke="#ff10ff" stroke-width="1"/>
<rect x="506.4" y="558" width="7.1" height="12.0" fill="#fde8e8" stroke="#f08080" stroke-width="1"/>
<path d="M508.4 568L509.4 560L510.5 560L511.5 568" fill="none" stroke="#ff10ff" stroke-width="1"/>
<rect x="506.4" y="584" width="7.1" height="12.0" fill="#fde8e8" stroke="#f08080" stroke-width="1"/>
<path d="M508.4 594L509.4 586L510.5 586L511.5 594" fill="none" stroke="#ff10ff" stroke-width="1"/>
<rect x="506.4" y="610" width="7.1" height="12.0" fill="#fde8e8" stroke="#f08080" stroke-width="1"/>
<path d="M508.4 620L509.4 612L510.5 612L511.5 620" fill="none" stroke="#ff10ff" stroke-width="1"/>
<rect x="506.4" y="636" width="7.1" height="12.0" fill="#fde8e8" stroke="#f08080" stroke-width="1"/>
<path d="M508.4 646L509.4 638L510.5 638L511.5 646" fill="none" stroke="#ff10ff" stroke-width="1"/>
<path d="M477.0 434.5h12" stroke="#00e000" stroke-width="2" stroke-dasharray="1.6 0.6"/>
<rect x="476.5" y="437.0" width="13" height="4.5" fill="#fff" stroke="#ff10ff" stroke-width="1.1"/>
<path d="M478.5 439.2h9" stroke="#00e000" stroke-width="2" stroke-dasharray="1.6 0.6"/>
<path d="M477.0 460.5h12" stroke="#00e000" stroke-width="2" stroke-dasharray="1.6 0.6"/>
<rect x="476.5" y="463.0" width="13" height="4.5" fill="#fff" stroke="#ff10ff" stroke-width="1.1"/>
<path d="M478.5 465.2h9" stroke="#00e000" stroke-width="2" stroke-dasharray="1.6 0.6"/>
<path d="M477.0 487.5h12" stroke="#00e000" stroke-width="2" stroke-dasharray="1.6 0.6"/>
<rect x="476.5" y="490.0" width="13" height="4.5" fill="#fff" stroke="#ff10ff" stroke-width="1.1"/>
<path d="M478.5 492.2h9" stroke="#00e000" stroke-width="2" stroke-dasharray="1.6 0.6"/>
<path d="M477.0 512.5h12" stroke="#00e000" stroke-width="2" stroke-dasharray="1.6 0.6"/>
<rect x="476.5" y="515.0" width="13" height="4.5" fill="#fff" stroke="#ff10ff" stroke-width="1.1"/>
<path d="M478.5 517.2h9" stroke="#00e000" stroke-width="2" stroke-dasharray="1.6 0.6"/>
<path d="M477.0 538.5h12" stroke="#00e000" stroke-width="2" stroke-dasharray="1.6 0.6"/>
<rect x="476.5" y="541.0" width="13" height="4.5" fill="#fff" stroke="#ff10ff" stroke-width="1.1"/>
<path d="M478.5 543.2h9" stroke="#00e000" stroke-width="2" stroke-dasharray="1.6 0.6"/>
<path d="M477.0 565.5h12" stroke="#00e000" stroke-width="2" stroke-dasharray="1.6 0.6"/>
<rect x="476.5" y="568.0" width="13" height="4.5" fill="#fff" stroke="#ff10ff" stroke-width="1.1"/>
<path d="M478.5 570.2h9" stroke="#00e000" stroke-width="2" stroke-dasharray="1.6 0.6"/>
<path d="M477.0 591.5h12" stroke="#00e000" stroke-width="2" stroke-dasharray="1.6 0.6"/>
<rect x="476.5" y="594.0" width="13" height="4.5" fill="#fff" stroke="#ff10ff" stroke-width="1.1"/>
<path d="M478.5 596.2h9" stroke="#00e000" stroke-width="2" stroke-dasharray="1.6 0.6"/>
<path d="M477.0 617.5h12" stroke="#00e000" stroke-width="2" stroke-dasharray="1.6 0.6"/>
<rect x="476.5" y="620.0" width="13" height="4.5" fill="#fff" stroke="#ff10ff" stroke-width="1.1"/>
<path d="M478.5 622.2h9" stroke="#00e000" stroke-width="2" stroke-dasharray="1.6 0.6"/>
<path d="M477.0 643.5h12" stroke="#00e000" stroke-width="2" stroke-dasharray="1.6 0.6"/>
<rect x="476.5" y="646.0" width="13" height="4.5" fill="#fff" stroke="#ff10ff" stroke-width="1.1"/>
<path d="M478.5 648.2h9" stroke="#00e000" stroke-width="2" stroke-dasharray="1.6 0.6"/>
<rect x="433.4" y="418.7" width="8.0" height="54.3" fill="none" stroke="#ff2020" stroke-width="1.4"/>
<rect x="421" y="447" width="20.0" height="10.0" fill="#fff" stroke="#2ee82e" stroke-width="1.3"/>
<rect x="404.0" y="448.0" width="13" height="4.5" fill="#fff" stroke="#ff10ff" stroke-width="1.1"/>
<path d="M406.0 450.2h9" stroke="#00e000" stroke-width="2" stroke-dasharray="2 0.6"/>
<rect x="439.5" y="416.5" width="3.0" height="5.0" fill="#2a2ae0"/>
<rect x="439.5" y="444.5" width="3.0" height="5.0" fill="#2a2ae0"/>
<rect x="439.5" y="454.5" width="3.0" height="5.0" fill="#2a2ae0"/>
<rect x="439.5" y="470.5" width="3.0" height="5.0" fill="#2a2ae0"/>
<rect x="419.5" y="446.5" width="3.0" height="5.0" fill="#2a2ae0"/>
<path d="M432.5 576L432.5 682.4" fill="none" stroke="#ffee00" stroke-width="1.2"/>
<rect x="436" y="588" width="4.0" height="32.0" fill="#ffb0b0" stroke="#ff2020" stroke-width="1"/>
<rect x="436" y="640" width="4.0" height="32.0" fill="#ffb0b0" stroke="#ff2020" stroke-width="1"/>
<rect x="453" y="655" width="47.0" height="28.0" fill="none" stroke="#ff2020" stroke-width="1.3"/>
<rect x="456" y="666" width="15.0" height="16.0" fill="#ccc" stroke="#ff8030" stroke-width="1.4"/>
<rect x="458" y="668" width="11.0" height="12.0" fill="#ddd" stroke="#444" stroke-width="1"/>
<rect x="476" y="660" width="20.0" height="23.0" fill="#ffe8e8" stroke="#ff2020" stroke-width="1.1"/>
<rect x="477" y="662.0" width="18.0" height="1.0" fill="#ff5050"/>
<rect x="477" y="665.5" width="18.0" height="1.0" fill="#ff5050"/>
<rect x="477" y="669.0" width="18.0" height="1.0" fill="#ff5050"/>
<rect x="477" y="672.5" width="18.0" height="1.0" fill="#ff5050"/>
<rect x="477" y="676.0" width="18.0" height="1.0" fill="#ff5050"/>
<rect x="477" y="679.5" width="18.0" height="1.0" fill="#ff5050"/>
<rect x="498" y="660" width="6.0" height="30.0" fill="none" stroke="#ff8080" stroke-width="1"/>
<rect x="469.5" y="690.0" width="13" height="4.5" fill="#fff" stroke="#ff10ff" stroke-width="1.1"/>
<path d="M471.5 692.2h9" stroke="#00e000" stroke-width="2" stroke-dasharray="2 0.6"/>
<rect x="437.8" y="573.5" width="3.0" height="5.0" fill="#2a2ae0"/>
<rect x="437.8" y="626.5" width="3.0" height="5.0" fill="#2a2ae0"/>
<rect x="437.8" y="699.5" width="3.0" height="5.0" fill="#2a2ae0"/>
<rect x="451.5" y="680.5" width="3.0" height="5.0" fill="#2a2ae0"/>
<rect x="498.5" y="680.5" width="3.0" height="5.0" fill="#2a2ae0"/>
<path d="M334.8 498.6L441 498.6" fill="none" stroke="#ff2020" stroke-width="1.4"/>
<path d="M334.8 498.6L334.8 543.9" fill="none" stroke="#ff2020" stroke-width="1.4"/>
<path d="M361.6 498.6L361.6 543.9" fill="none" stroke="#2ee82e" stroke-width="1.4"/>
<path d="M388.2 498.6L388.2 543.9" fill="none" stroke="#ff2020" stroke-width="1.4"/>
<path d="M414.3 498.6L414.3 543.9" fill="none" stroke="#ff2020" stroke-width="1.4"/>
<path d="M441 498.6L441 543.9" fill="none" stroke="#ff2020" stroke-width="1.4"/>
<path d="M334.8 543.9L441 543.9" fill="none" stroke="#ff2020" stroke-width="1.4"/>
<rect x="346.4" y="528.8" width="30.8" height="18.6" fill="url(#bh)" stroke="#7aa030" stroke-width="0.8"/>
<path d="M361.8 528.8V547.4" stroke="#e8d030" stroke-width="0.9"/>
<rect x="399" y="528.8" width="31.0" height="18.6" fill="url(#bh)" stroke="#7aa030" stroke-width="0.8"/>
<path d="M414.5 528.8V547.4" stroke="#e8d030" stroke-width="0.9"/>
<path d="M334.8 557.2L441 557.2" fill="none" stroke="#2ee82e" stroke-width="1.4"/>
<rect x="346" y="558" width="31.0" height="4.0" fill="#fff" stroke="#ff2020" stroke-width="1.3"/>
<rect x="399" y="558" width="30.0" height="4.0" fill="#fff" stroke="#ff2020" stroke-width="1.3"/>
<path d="M334.5 557L334.5 565.4L438.7 565.4" fill="none" stroke="#ffee00" stroke-width="1.3"/>
<rect x="317" y="526" width="18.0" height="31.0" fill="#ffe4e4" stroke="#ff2020" stroke-width="1.3"/>
<rect x="318" y="528.0" width="16.0" height="1.0" fill="#ff4040"/>
<rect x="318" y="531.6" width="16.0" height="1.0" fill="#ff4040"/>
<rect x="318" y="535.2" width="16.0" height="1.0" fill="#ff4040"/>
<rect x="318" y="538.8" width="16.0" height="1.0" fill="#ff4040"/>
<rect x="318" y="542.4" width="16.0" height="1.0" fill="#ff4040"/>
<rect x="318" y="546.0" width="16.0" height="1.0" fill="#ff4040"/>
<rect x="318" y="549.6" width="16.0" height="1.0" fill="#ff4040"/>
<rect x="318" y="553.2" width="16.0" height="1.0" fill="#ff4040"/>
<path d="M326 535L335 544" fill="none" stroke="#2a2ae0" stroke-width="1.6"/>
<rect x="342" y="490" width="14.0" height="8.6" fill="#fde8e8" stroke="#f08080" stroke-width="1"/>
<path d="M344 496.6L345 492L353 492L354 496.6" fill="none" stroke="#ff10ff" stroke-width="1"/>
<rect x="368" y="490" width="14.0" height="8.6" fill="#fde8e8" stroke="#f08080" stroke-width="1"/>
<path d="M370 496.6L371 492L379 492L380 496.6" fill="none" stroke="#ff10ff" stroke-width="1"/>
<rect x="394" y="490" width="14.0" height="8.6" fill="#fde8e8" stroke="#f08080" stroke-width="1"/>
<path d="M396 496.6L397 492L405 492L406 496.6" fill="none" stroke="#ff10ff" stroke-width="1"/>
<rect x="420" y="490" width="14.0" height="8.6" fill="#fde8e8" stroke="#f08080" stroke-width="1"/>
<path d="M422 496.6L423 492L431 492L432 496.6" fill="none" stroke="#ff10ff" stroke-width="1"/>
<path d="M343.0 511.5h12" stroke="#00e000" stroke-width="2" stroke-dasharray="1.6 0.6"/>
<rect x="342.5" y="514.0" width="13" height="4.5" fill="#fff" stroke="#ff10ff" stroke-width="1.1"/>
<path d="M344.5 516.2h9" stroke="#00e000" stroke-width="2" stroke-dasharray="1.6 0.6"/>
<path d="M369.0 511.5h12" stroke="#00e000" stroke-width="2" stroke-dasharray="1.6 0.6"/>
<rect x="368.5" y="514.0" width="13" height="4.5" fill="#fff" stroke="#ff10ff" stroke-width="1.1"/>
<path d="M370.5 516.2h9" stroke="#00e000" stroke-width="2" stroke-dasharray="1.6 0.6"/>
<path d="M395.0 511.5h12" stroke="#00e000" stroke-width="2" stroke-dasharray="1.6 0.6"/>
<rect x="394.5" y="514.0" width="13" height="4.5" fill="#fff" stroke="#ff10ff" stroke-width="1.1"/>
<path d="M396.5 516.2h9" stroke="#00e000" stroke-width="2" stroke-dasharray="1.6 0.6"/>
<path d="M421.0 511.5h12" stroke="#00e000" stroke-width="2" stroke-dasharray="1.6 0.6"/>
<rect x="420.5" y="514.0" width="13" height="4.5" fill="#fff" stroke="#ff10ff" stroke-width="1.1"/>
<path d="M422.5 516.2h9" stroke="#00e000" stroke-width="2" stroke-dasharray="1.6 0.6"/>
<rect x="380.5" y="548.0" width="13" height="4.5" fill="#fff" stroke="#ff10ff" stroke-width="1.1"/>
<path d="M382.5 550.2h9" stroke="#00e000" stroke-width="2" stroke-dasharray="2 0.6"/>
<rect x="347.5" y="569.0" width="13" height="4.5" fill="#fff" stroke="#ff10ff" stroke-width="1.1"/>
<path d="M349.5 571.2h9" stroke="#00e000" stroke-width="2" stroke-dasharray="2 0.6"/>
<rect x="391.5" y="568.0" width="13" height="4.5" fill="#fff" stroke="#ff10ff" stroke-width="1.1"/>
<path d="M393.5 570.2h9" stroke="#00e000" stroke-width="2" stroke-dasharray="2 0.6"/>
<rect x="413.5" y="588.0" width="13" height="4.5" fill="#fff" stroke="#ff10ff" stroke-width="1.1"/>
<path d="M415.5 590.2h9" stroke="#00e000" stroke-width="2" stroke-dasharray="2 0.6"/>
<rect x="333.3" y="496.5" width="3.0" height="5.0" fill="#2a2ae0"/>
<rect x="386.7" y="496.5" width="3.0" height="5.0" fill="#2a2ae0"/>
<rect x="439.5" y="496.5" width="3.0" height="5.0" fill="#2a2ae0"/>
<rect x="333.3" y="528.5" width="3.0" height="5.0" fill="#2a2ae0"/>
<rect x="386.7" y="528.5" width="3.0" height="5.0" fill="#2a2ae0"/>
<rect x="439.5" y="528.5" width="3.0" height="5.0" fill="#2a2ae0"/>
<rect x="333.3" y="554.5" width="3.0" height="5.0" fill="#2a2ae0"/>
<rect x="386.7" y="554.5" width="3.0" height="5.0" fill="#2a2ae0"/>
<rect x="439.5" y="554.5" width="3.0" height="5.0" fill="#2a2ae0"/>
<path d="M358 550L362 555L366 550" fill="none" stroke="#ff10ff" stroke-width="1.5"/>
<path d="M410 550L414 555L418 550" fill="none" stroke="#ff10ff" stroke-width="1.5"/>
<path d="M525.7 656.6L631.5 656.6" fill="none" stroke="#ff2020" stroke-width="1.4"/>
<path d="M525.7 656.6L525.7 688" fill="none" stroke="#ff2020" stroke-width="1.3"/>
<path d="M552.6 656.6L552.6 688" fill="none" stroke="#2ee82e" stroke-width="1.3"/>
<path d="M578.8 656.6L578.8 688" fill="none" stroke="#2ee82e" stroke-width="1.3"/>
<path d="M604.8 656.6L604.8 688" fill="none" stroke="#2ee82e" stroke-width="1.3"/>
<path d="M631.5 656.6L631.5 688" fill="none" stroke="#ff2020" stroke-width="1.3"/>
<path d="M525.7 656.6L525.7 702.6" fill="none" stroke="#ff2020" stroke-width="1.3"/>
<path d="M631.5 656.6L631.5 715.4" fill="none" stroke="#2ee82e" stroke-width="1.3"/>
<rect x="537.6" y="687" width="82.8" height="15.6" fill="url(#bh)" stroke="#7aa030" stroke-width="0.8"/>
<path d="M565.2 687V702.6" stroke="#e8d030" stroke-width="0.9"/>
<path d="M592.8 687V702.6" stroke="#e8d030" stroke-width="0.9"/>
<path d="M466.9 715.4L631.5 715.4" fill="none" stroke="#ff2020" stroke-width="1.2"/>
<path d="M500 702.6L631.5 702.6" fill="none" stroke="#2ee82e" stroke-width="1.0"/>
<rect x="471" y="715" width="21.0" height="4.0" fill="#fff" stroke="#ff2020" stroke-width="1.3"/>
<rect x="500" y="715" width="20.0" height="4.0" fill="#fff" stroke="#ff2020" stroke-width="1.3"/>
<rect x="530" y="715" width="37.0" height="4.0" fill="#fff" stroke="#ff2020" stroke-width="1.3"/>
<path d="M460 704L460 722.8L638.8 722.8L638.8 701" fill="none" stroke="#ffee00" stroke-width="1.3"/>
<rect x="589" y="716" width="31.4" height="15.0" fill="#ffe0e0" stroke="#ff2020" stroke-width="1.3"/>
<rect x="592" y="718" width="1.0" height="11.0" fill="#ff3030"/>
<rect x="595" y="718" width="1.0" height="11.0" fill="#ff3030"/>
<rect x="598" y="718" width="1.0" height="11.0" fill="#ff3030"/>
<rect x="601" y="718" width="1.0" height="11.0" fill="#ff3030"/>
<rect x="604" y="718" width="1.0" height="11.0" fill="#ff3030"/>
<rect x="607" y="718" width="1.0" height="11.0" fill="#ff3030"/>
<rect x="610" y="718" width="1.0" height="11.0" fill="#ff3030"/>
<rect x="613" y="718" width="1.0" height="11.0" fill="#ff3030"/>
<rect x="616" y="718" width="1.0" height="11.0" fill="#ff3030"/>
<path d="M604 719L612 726" fill="none" stroke="#2a2ae0" stroke-width="1.5"/>
<rect x="532" y="648" width="14.0" height="9.0" fill="#fde8e8" stroke="#f08080" stroke-width="1"/>
<path d="M534 655L535 650L543 650L544 655" fill="none" stroke="#ff10ff" stroke-width="1"/>
<rect x="533" y="648" width="12.0" height="9.0" fill="none" stroke="#ff3030" stroke-width="1"/>
<rect x="559" y="648" width="14.0" height="9.0" fill="#fde8e8" stroke="#f08080" stroke-width="1"/>
<path d="M561 655L562 650L570 650L571 655" fill="none" stroke="#ff10ff" stroke-width="1"/>
<rect x="560" y="648" width="12.0" height="9.0" fill="none" stroke="#ff3030" stroke-width="1"/>
<rect x="585" y="648" width="14.0" height="9.0" fill="#fde8e8" stroke="#f08080" stroke-width="1"/>
<path d="M587 655L588 650L596 650L597 655" fill="none" stroke="#ff10ff" stroke-width="1"/>
<rect x="586" y="648" width="12.0" height="9.0" fill="none" stroke="#ff3030" stroke-width="1"/>
<rect x="612" y="648" width="14.0" height="9.0" fill="#fde8e8" stroke="#f08080" stroke-width="1"/>
<path d="M614 655L615 650L623 650L624 655" fill="none" stroke="#ff10ff" stroke-width="1"/>
<rect x="613" y="648" width="12.0" height="9.0" fill="none" stroke="#ff3030" stroke-width="1"/>
<path d="M533.0 668.5h12" stroke="#00e000" stroke-width="2" stroke-dasharray="1.6 0.6"/>
<rect x="532.5" y="671.0" width="13" height="4.5" fill="#fff" stroke="#ff10ff" stroke-width="1.1"/>
<path d="M534.5 673.2h9" stroke="#00e000" stroke-width="2" stroke-dasharray="1.6 0.6"/>
<path d="M559.0 668.5h12" stroke="#00e000" stroke-width="2" stroke-dasharray="1.6 0.6"/>
<rect x="558.5" y="671.0" width="13" height="4.5" fill="#fff" stroke="#ff10ff" stroke-width="1.1"/>
<path d="M560.5 673.2h9" stroke="#00e000" stroke-width="2" stroke-dasharray="1.6 0.6"/>
<path d="M585.0 668.5h12" stroke="#00e000" stroke-width="2" stroke-dasharray="1.6 0.6"/>
<rect x="584.5" y="671.0" width="13" height="4.5" fill="#fff" stroke="#ff10ff" stroke-width="1.1"/>
<path d="M586.5 673.2h9" stroke="#00e000" stroke-width="2" stroke-dasharray="1.6 0.6"/>
<path d="M612.0 668.5h12" stroke="#00e000" stroke-width="2" stroke-dasharray="1.6 0.6"/>
<rect x="611.5" y="671.0" width="13" height="4.5" fill="#fff" stroke="#ff10ff" stroke-width="1.1"/>
<path d="M613.5 673.2h9" stroke="#00e000" stroke-width="2" stroke-dasharray="1.6 0.6"/>
<rect x="498" y="688" width="27.7" height="14.6" fill="#fff" stroke="#2ee82e" stroke-width="1.3"/>
<path d="M505.0 691.5h12" stroke="#00e000" stroke-width="2" stroke-dasharray="1.6 0.6"/>
<rect x="504.5" y="694.0" width="13" height="4.5" fill="#fff" stroke="#ff10ff" stroke-width="1.1"/>
<path d="M506.5 696.2h9" stroke="#00e000" stroke-width="2" stroke-dasharray="1.6 0.6"/>
<rect x="532.0" y="731.0" width="13" height="4.5" fill="#fff" stroke="#ff10ff" stroke-width="1.1"/>
<path d="M534.0 733.2h9" stroke="#00e000" stroke-width="2" stroke-dasharray="2 0.6"/>
<rect x="583.5" y="706.0" width="13" height="4.5" fill="#fff" stroke="#ff10ff" stroke-width="1.1"/>
<path d="M585.5 708.2h9" stroke="#00e000" stroke-width="2" stroke-dasharray="2 0.6"/>
<path d="M481 708L485 712L489 708" fill="none" stroke="#ff10ff" stroke-width="1.5"/>
<path d="M506 708L510 712L514 708" fill="none" stroke="#ff10ff" stroke-width="1.5"/>
<path d="M549 708L553 712L557 708" fill="none" stroke="#ff10ff" stroke-width="1.5"/>
<rect x="524.2" y="654.5" width="3.0" height="5.0" fill="#2a2ae0"/>
<rect x="577.3" y="654.5" width="3.0" height="5.0" fill="#2a2ae0"/>
<rect x="630.0" y="654.5" width="3.0" height="5.0" fill="#2a2ae0"/>
<rect x="524.2" y="685.5" width="3.0" height="5.0" fill="#2a2ae0"/>
<rect x="630.0" y="685.5" width="3.0" height="5.0" fill="#2a2ae0"/>
<rect x="524.2" y="712.5" width="3.0" height="5.0" fill="#2a2ae0"/>
<rect x="577.3" y="712.5" width="3.0" height="5.0" fill="#2a2ae0"/>
<rect x="630.0" y="712.5" width="3.0" height="5.0" fill="#2a2ae0"/>
<rect x="465.5" y="712.5" width="3.0" height="5.0" fill="#2a2ae0"/>
<rect x="496.5" y="712.5" width="3.0" height="5.0" fill="#2a2ae0"/>
<rect x="462.8" y="708" width="2.4" height="4.0" fill="#ff10ff"/>
<rect x="634.8" y="708" width="2.4" height="4.0" fill="#ff10ff"/>
<rect x="468.8" y="719" width="2.4" height="4.0" fill="#ff10ff"/>
<rect x="498.8" y="719" width="2.4" height="4.0" fill="#ff10ff"/>
<rect x="528.8" y="719" width="2.4" height="4.0" fill="#ff10ff"/>
<rect x="566.8" y="719" width="2.4" height="4.0" fill="#ff10ff"/>
<rect x="586.8" y="719" width="2.4" height="4.0" fill="#ff10ff"/>
<rect x="623.8" y="719" width="2.4" height="4.0" fill="#ff10ff"/>
<path d="M543 365L548 361L553 365" fill="none" stroke="#ff10ff" stroke-width="1.4"/>
<path d="M595 365L600 361L605 365" fill="none" stroke="#ff10ff" stroke-width="1.4"/>
<path d="M349 325L354 321L359 325" fill="none" stroke="#ff10ff" stroke-width="1.4"/>
<path d="M384 325L389 321L394 325" fill="none" stroke="#ff10ff" stroke-width="1.4"/>
<path d="M429 325L434 321L439 325" fill="none" stroke="#ff10ff" stroke-width="1.4"/>
<circle cx="269.3" cy="209.3" r="8.2" fill="#fff" stroke="#ffee00" stroke-width="1.8"/>
<text x="269.3" y="213.9" font-size="12.5" text-anchor="middle" fill="#1010e8" font-family="Liberation Sans" transform="translate(269.3 209.3) scale(0.85 1) translate(-269.3 -209.3)">A</text>
<circle cx="316.2" cy="209.3" r="8.2" fill="#fff" stroke="#ffee00" stroke-width="1.8"/>
<text x="316.2" y="213.9" font-size="12.5" text-anchor="middle" fill="#1010e8" font-family="Liberation Sans" transform="translate(316.2 209.3) scale(0.85 1) translate(-316.2 -209.3)">B</text>
<circle cx="335.1" cy="209.3" r="8.2" fill="#fff" stroke="#ffee00" stroke-width="1.8"/>
<text x="335.1" y="213.9" font-size="12.5" text-anchor="middle" fill="#1010e8" font-family="Liberation Sans" transform="translate(335.1 209.3) scale(0.85 1) translate(-335.1 -209.3)">C</text>
<circle cx="368.8" cy="209.3" r="8.2" fill="#fff" stroke="#ffee00" stroke-width="1.8"/>
<text x="368.8" y="213.9" font-size="12.5" text-anchor="middle" fill="#1010e8" font-family="Liberation Sans" transform="translate(368.8 209.3) scale(0.85 1) translate(-368.8 -209.3)">D</text>
<circle cx="387.2" cy="209.3" r="8.2" fill="#fff" stroke="#ffee00" stroke-width="1.8"/>
<text x="387.2" y="213.9" font-size="12.5" text-anchor="middle" fill="#1010e8" font-family="Liberation Sans" transform="translate(387.2 209.3) scale(0.85 1) translate(-387.2 -209.3)">E</text>
<circle cx="421.3" cy="209.3" r="8.2" fill="#fff" stroke="#ffee00" stroke-width="1.8"/>
<text x="421.3" y="213.9" font-size="12.5" text-anchor="middle" fill="#1010e8" font-family="Liberation Sans" transform="translate(421.3 209.3) scale(0.85 1) translate(-421.3 -209.3)">F</text>
<circle cx="440.3" cy="209.3" r="8.2" fill="#fff" stroke="#ffee00" stroke-width="1.8"/>
<text x="440.3" y="213.9" font-size="12.5" text-anchor="middle" fill="#1010e8" font-family="Liberation Sans" transform="translate(440.3 209.3) scale(0.85 1) translate(-440.3 -209.3)">G</text>
<circle cx="458.5" cy="209.3" r="8.2" fill="#fff" stroke="#ffee00" stroke-width="1.8"/>
<text x="458.5" y="213.9" font-size="12.5" text-anchor="middle" fill="#1010e8" font-family="Liberation Sans" transform="translate(458.5 209.3) scale(0.85 1) translate(-458.5 -209.3)">H</text>
<path d="M466.6 200.5V224" stroke="#aaa" stroke-width="1"/>
<circle cx="466.6" cy="192.5" r="8.2" fill="#fff" stroke="#ffee00" stroke-width="1.8"/>
<text x="466.6" y="197.1" font-size="12.5" text-anchor="middle" fill="#1010e8" font-family="Liberation Sans" transform="translate(466.6 192.5) scale(0.85 1) translate(-466.6 -192.5)">J</text>
<circle cx="498.3" cy="209.3" r="8.2" fill="#fff" stroke="#ffee00" stroke-width="1.8"/>
<text x="498.3" y="213.9" font-size="12.5" text-anchor="middle" fill="#1010e8" font-family="Liberation Sans" transform="translate(498.3 209.3) scale(0.85 1) translate(-498.3 -209.3)">K</text>
<circle cx="526" cy="209.3" r="8.2" fill="#fff" stroke="#ffee00" stroke-width="1.8"/>
<text x="526" y="213.9" font-size="12.5" text-anchor="middle" fill="#1010e8" font-family="Liberation Sans" transform="translate(526 209.3) scale(0.85 1) translate(-526 -209.3)">L</text>
<circle cx="556" cy="209.3" r="8.2" fill="#fff" stroke="#ffee00" stroke-width="1.8"/>
<text x="556" y="213.9" font-size="12.5" text-anchor="middle" fill="#1010e8" font-family="Liberation Sans" transform="translate(556 209.3) scale(0.85 1) translate(-556 -209.3)">M</text>
<circle cx="578.5" cy="209.3" r="8.2" fill="#fff" stroke="#ffee00" stroke-width="1.8"/>
<text x="578.5" y="213.9" font-size="12.5" text-anchor="middle" fill="#1010e8" font-family="Liberation Sans" transform="translate(578.5 209.3) scale(0.85 1) translate(-578.5 -209.3)">N</text>
<circle cx="600.5" cy="209.3" r="8.2" fill="#fff" stroke="#ffee00" stroke-width="1.8"/>
<text x="600.5" y="213.9" font-size="12.5" text-anchor="middle" fill="#1010e8" font-family="Liberation Sans" transform="translate(600.5 209.3) scale(0.85 1) translate(-600.5 -209.3)">P</text>
<circle cx="631.4" cy="209.3" r="8.2" fill="#fff" stroke="#ffee00" stroke-width="1.8"/>
<text x="631.4" y="213.9" font-size="12.5" text-anchor="middle" fill="#1010e8" font-family="Liberation Sans" transform="translate(631.4 209.3) scale(0.85 1) translate(-631.4 -209.3)">Q</text>
<circle cx="670.7" cy="209.3" r="8.2" fill="#fff" stroke="#ffee00" stroke-width="1.8"/>
<text x="670.7" y="213.9" font-size="12.5" text-anchor="middle" fill="#1010e8" font-family="Liberation Sans" transform="translate(670.7 209.3) scale(0.85 1) translate(-670.7 -209.3)">R</text>
<circle cx="736.5" cy="209.3" r="8.2" fill="#fff" stroke="#ffee00" stroke-width="1.8"/>
<text x="736.5" y="213.9" font-size="12.5" text-anchor="middle" fill="#1010e8" font-family="Liberation Sans" transform="translate(736.5 209.3) scale(0.85 1) translate(-736.5 -209.3)">S</text>
<circle cx="789.3" cy="209.3" r="8.2" fill="#fff" stroke="#ffee00" stroke-width="1.8"/>
<text x="789.3" y="213.9" font-size="12.5" text-anchor="middle" fill="#1010e8" font-family="Liberation Sans" transform="translate(789.3 209.3) scale(0.85 1) translate(-789.3 -209.3)">T</text>
<circle cx="841.8" cy="209.3" r="8.2" fill="#fff" stroke="#ffee00" stroke-width="1.8"/>
<text x="841.8" y="213.9" font-size="12.5" text-anchor="middle" fill="#1010e8" font-family="Liberation Sans" transform="translate(841.8 209.3) scale(0.85 1) translate(-841.8 -209.3)">U</text>
<path d="M855.1 200.5V224" stroke="#aaa" stroke-width="1"/>
<circle cx="855.1" cy="192.5" r="8.2" fill="#fff" stroke="#ffee00" stroke-width="1.8"/>
<text x="855.1" y="197.1" font-size="12.5" text-anchor="middle" fill="#1010e8" font-family="Liberation Sans" transform="translate(855.1 192.5) scale(0.85 1) translate(-855.1 -192.5)">V</text>
<circle cx="894.4" cy="209.3" r="8.2" fill="#fff" stroke="#ffee00" stroke-width="1.8"/>
<text x="894.4" y="213.9" font-size="12.5" text-anchor="middle" fill="#1010e8" font-family="Liberation Sans" transform="translate(894.4 209.3) scale(0.85 1) translate(-894.4 -209.3)">W</text>
<circle cx="947" cy="209.3" r="8.2" fill="#fff" stroke="#ffee00" stroke-width="1.8"/>
<text x="947" y="213.9" font-size="12.5" text-anchor="middle" fill="#1010e8" font-family="Liberation Sans" transform="translate(947 209.3) scale(0.85 1) translate(-947 -209.3)">X</text>
<circle cx="982.4" cy="209.3" r="8.2" fill="#fff" stroke="#ffee00" stroke-width="1.8"/>
<text x="982.4" y="213.9" font-size="12.5" text-anchor="middle" fill="#1010e8" font-family="Liberation Sans" transform="translate(982.4 209.3) scale(0.85 1) translate(-982.4 -209.3)">Y</text>
<circle cx="1131" cy="281.6" r="8.2" fill="#fff" stroke="#ffee00" stroke-width="1.8"/>
<text x="1131" y="286.20000000000005" font-size="12.5" text-anchor="middle" fill="#1010e8" font-family="Liberation Sans" transform="translate(1131 281.6) scale(0.85 1) translate(-1131 -281.6)">0</text>
<circle cx="1131" cy="300.6" r="8.2" fill="#fff" stroke="#ffee00" stroke-width="1.8"/>
<text x="1131" y="305.20000000000005" font-size="12.5" text-anchor="middle" fill="#1010e8" font-family="Liberation Sans" transform="translate(1131 300.6) scale(0.85 1) translate(-1131 -300.6)">1</text>
<circle cx="1131" cy="320.4" r="8.2" fill="#fff" stroke="#ffee00" stroke-width="1.8"/>
<text x="1131" y="325.0" font-size="12.5" text-anchor="middle" fill="#1010e8" font-family="Liberation Sans" transform="translate(1131 320.4) scale(0.85 1) translate(-1131 -320.4)">2</text>
<circle cx="1148" cy="327.5" r="8.2" fill="#fff" stroke="#ffee00" stroke-width="1.8"/>
<text x="1148" y="332.1" font-size="12.5" text-anchor="middle" fill="#1010e8" font-family="Liberation Sans" transform="translate(1148 327.5) scale(0.85 1) translate(-1148 -327.5)">3</text>
<circle cx="1164" cy="340" r="8.2" fill="#fff" stroke="#ffee00" stroke-width="1.8"/>
<text x="1164" y="344.6" font-size="12.5" text-anchor="middle" fill="#1010e8" font-family="Liberation Sans" transform="translate(1164 340) scale(0.75 1) translate(-1164 -340)">3.3</text>
<circle cx="1131" cy="347" r="8.2" fill="#fff" stroke="#ffee00" stroke-width="1.8"/>
<text x="1131" y="351.6" font-size="12.5" text-anchor="middle" fill="#1010e8" font-family="Liberation Sans" transform="translate(1131 347) scale(0.85 1) translate(-1131 -347)">4</text>
<circle cx="1148" cy="359.6" r="8.2" fill="#fff" stroke="#ffee00" stroke-width="1.8"/>
<text x="1148" y="364.20000000000005" font-size="12.5" text-anchor="middle" fill="#1010e8" font-family="Liberation Sans" transform="translate(1148 359.6) scale(0.85 1) translate(-1148 -359.6)">5</text>
<circle cx="1131" cy="379.4" r="8.2" fill="#fff" stroke="#ffee00" stroke-width="1.8"/>
<text x="1131" y="384.0" font-size="12.5" text-anchor="middle" fill="#1010e8" font-family="Liberation Sans" transform="translate(1131 379.4) scale(0.85 1) translate(-1131 -379.4)">6</text>
<circle cx="1164" cy="379.4" r="8.2" fill="#fff" stroke="#ffee00" stroke-width="1.8"/>
<text x="1164" y="384.0" font-size="12.5" text-anchor="middle" fill="#1010e8" font-family="Liberation Sans" transform="translate(1164 379.4) scale(0.75 1) translate(-1164 -379.4)">6.2</text>
<circle cx="1148" cy="387" r="8.2" fill="#fff" stroke="#ffee00" stroke-width="1.8"/>
<text x="1148" y="391.6" font-size="12.5" text-anchor="middle" fill="#1010e8" font-family="Liberation Sans" transform="translate(1148 387) scale(0.85 1) translate(-1148 -387)">7</text>
<circle cx="1148" cy="404.7" r="8.2" fill="#fff" stroke="#ffee00" stroke-width="1.8"/>
<text x="1148" y="409.3" font-size="12.5" text-anchor="middle" fill="#1010e8" font-family="Liberation Sans" transform="translate(1148 404.7) scale(0.75 1) translate(-1148 -404.7)">7.9</text>
<circle cx="1131" cy="419.8" r="8.2" fill="#fff" stroke="#ffee00" stroke-width="1.8"/>
<text x="1131" y="424.40000000000003" font-size="12.5" text-anchor="middle" fill="#1010e8" font-family="Liberation Sans" transform="translate(1131 419.8) scale(0.85 1) translate(-1131 -419.8)">8</text>
<circle cx="1164" cy="419.8" r="8.2" fill="#fff" stroke="#ffee00" stroke-width="1.8"/>
<text x="1164" y="424.40000000000003" font-size="12.5" text-anchor="middle" fill="#1010e8" font-family="Liberation Sans" transform="translate(1164 419.8) scale(0.75 1) translate(-1164 -419.8)">8.2</text>
<circle cx="1148" cy="432" r="8.2" fill="#fff" stroke="#ffee00" stroke-width="1.8"/>
<text x="1148" y="436.6" font-size="12.5" text-anchor="middle" fill="#1010e8" font-family="Liberation Sans" transform="translate(1148 432) scale(0.75 1) translate(-1148 -432)">8.3</text>
<circle cx="1164" cy="445.4" r="8.2" fill="#fff" stroke="#ffee00" stroke-width="1.8"/>
<text x="1164" y="450.0" font-size="12.5" text-anchor="middle" fill="#1010e8" font-family="Liberation Sans" transform="translate(1164 445.4) scale(0.75 1) translate(-1164 -445.4)">8.6</text>
<circle cx="1131" cy="458.5" r="8.2" fill="#fff" stroke="#ffee00" stroke-width="1.8"/>
<text x="1131" y="463.1" font-size="12.5" text-anchor="middle" fill="#1010e8" font-family="Liberation Sans" transform="translate(1131 458.5) scale(0.85 1) translate(-1131 -458.5)">9</text>
<circle cx="1148" cy="471.6" r="8.2" fill="#fff" stroke="#ffee00" stroke-width="1.8"/>
<text x="1148" y="476.20000000000005" font-size="12.5" text-anchor="middle" fill="#1010e8" font-family="Liberation Sans" transform="translate(1148 471.6) scale(0.85 1) translate(-1148 -471.6)">10</text>
<circle cx="1131" cy="498.8" r="8.2" fill="#fff" stroke="#ffee00" stroke-width="1.8"/>
<text x="1131" y="503.40000000000003" font-size="12.5" text-anchor="middle" fill="#1010e8" font-family="Liberation Sans" transform="translate(1131 498.8) scale(0.85 1) translate(-1131 -498.8)">11</text>
<circle cx="1164" cy="512" r="8.2" fill="#fff" stroke="#ffee00" stroke-width="1.8"/>
<text x="1164" y="516.6" font-size="12.5" text-anchor="middle" fill="#1010e8" font-family="Liberation Sans" transform="translate(1164 512) scale(0.75 1) translate(-1164 -512)">11.1</text>
<circle cx="1131" cy="524.3" r="8.2" fill="#fff" stroke="#ffee00" stroke-width="1.8"/>
<text x="1131" y="528.9" font-size="12.5" text-anchor="middle" fill="#1010e8" font-family="Liberation Sans" transform="translate(1131 524.3) scale(0.85 1) translate(-1131 -524.3)">12</text>
<circle cx="1148" cy="531.3" r="8.2" fill="#fff" stroke="#ffee00" stroke-width="1.8"/>
<text x="1148" y="535.9" font-size="12.5" text-anchor="middle" fill="#1010e8" font-family="Liberation Sans" transform="translate(1148 531.3) scale(0.75 1) translate(-1148 -531.3)">12.2</text>
<circle cx="1131" cy="557" r="8.2" fill="#fff" stroke="#ffee00" stroke-width="1.8"/>
<text x="1131" y="561.6" font-size="12.5" text-anchor="middle" fill="#1010e8" font-family="Liberation Sans" transform="translate(1131 557) scale(0.85 1) translate(-1131 -557)">13</text>
<circle cx="1131" cy="577" r="8.2" fill="#fff" stroke="#ffee00" stroke-width="1.8"/>
<text x="1131" y="581.6" font-size="12.5" text-anchor="middle" fill="#1010e8" font-family="Liberation Sans" transform="translate(1131 577) scale(0.85 1) translate(-1131 -577)">14</text>
<circle cx="1131" cy="603" r="8.2" fill="#fff" stroke="#ffee00" stroke-width="1.8"/>
<text x="1131" y="607.6" font-size="12.5" text-anchor="middle" fill="#1010e8" font-family="Liberation Sans" transform="translate(1131 603) scale(0.85 1) translate(-1131 -603)">15</text>
<circle cx="1131" cy="629" r="8.2" fill="#fff" stroke="#ffee00" stroke-width="1.8"/>
<text x="1131" y="633.6" font-size="12.5" text-anchor="middle" fill="#1010e8" font-family="Liberation Sans" transform="translate(1131 629) scale(0.85 1) translate(-1131 -629)">16</text>
<circle cx="1131" cy="656" r="8.2" fill="#fff" stroke="#ffee00" stroke-width="1.8"/>
<text x="1131" y="660.6" font-size="12.5" text-anchor="middle" fill="#1010e8" font-family="Liberation Sans" transform="translate(1131 656) scale(0.85 1) translate(-1131 -656)">17</text>
<circle cx="1148" cy="667.5" r="8.2" fill="#fff" stroke="#ffee00" stroke-width="1.8"/>
<text x="1148" y="672.1" font-size="12.5" text-anchor="middle" fill="#1010e8" font-family="Liberation Sans" transform="translate(1148 667.5) scale(0.75 1) translate(-1148 -667.5)">17.1</text>
<circle cx="1131" cy="682" r="8.2" fill="#fff" stroke="#ffee00" stroke-width="1.8"/>
<text x="1131" y="686.6" font-size="12.5" text-anchor="middle" fill="#1010e8" font-family="Liberation Sans" transform="translate(1131 682) scale(0.85 1) translate(-1131 -682)">18</text>
<circle cx="1148" cy="689" r="8.2" fill="#fff" stroke="#ffee00" stroke-width="1.8"/>
<text x="1148" y="693.6" font-size="12.5" text-anchor="middle" fill="#1010e8" font-family="Liberation Sans" transform="translate(1148 689) scale(0.85 1) translate(-1148 -689)">19</text>
<circle cx="1131" cy="703" r="8.2" fill="#fff" stroke="#ffee00" stroke-width="1.8"/>
<text x="1131" y="707.6" font-size="12.5" text-anchor="middle" fill="#1010e8" font-family="Liberation Sans" transform="translate(1131 703) scale(0.85 1) translate(-1131 -703)">20</text>
<circle cx="1148" cy="715" r="8.2" fill="#fff" stroke="#ffee00" stroke-width="1.8"/>
<text x="1148" y="719.6" font-size="12.5" text-anchor="middle" fill="#1010e8" font-family="Liberation Sans" transform="translate(1148 715) scale(0.85 1) translate(-1148 -715)">21</text>
<circle cx="1131" cy="787" r="8.2" fill="#fff" stroke="#ffee00" stroke-width="1.8"/>
<text x="1131" y="791.6" font-size="12.5" text-anchor="middle" fill="#1010e8" font-family="Liberation Sans" transform="translate(1131 787) scale(0.85 1) translate(-1131 -787)">22</text>
<text x="1018" y="201" font-size="6.5" fill="#22cc22" font-family="Liberation Sans">LEGEND :</text>
<rect x="1015" y="204" width="28.0" height="27.0" fill="url(#bh)" stroke="#7aa030" stroke-width="0.8"/>
<text x="1046" y="210" font-size="5.5" fill="#22cc22" font-family="Liberation Sans">AREA WATERPROOFING</text>
<circle cx="269" cy="835.6" r="11.7" fill="none" stroke="#2020f0" stroke-width="1.3"/>
<path d="M257.3 835.5H379" stroke="#2020f0" stroke-width="1.3"/>
<text x="269" y="832.5" font-size="9" text-anchor="middle" fill="#2020c0" font-family="Liberation Sans">1</text>
<text x="269" y="842.5" font-size="6" font-weight="bold" text-anchor="middle" fill="#10d010" font-family="Liberation Sans" transform="translate(269 842) scale(0.8 1) translate(-269 -842)">A1-018</text>
<text x="287" y="825.5" font-size="10.5" font-weight="bold" fill="#2424f0" font-family="Liberation Sans" transform="translate(287 825) scale(0.68 1) translate(-287 -825)">DENAH WATERPROOFING</text>
<text x="287" y="835" font-size="10.5" font-weight="bold" fill="#2424f0" font-family="Liberation Sans" transform="translate(287 835) scale(0.68 1) translate(-287 -835)">LANTAI TIGA</text>
<text x="287" y="842.5" font-size="6.5" font-weight="bold" fill="#10d010" font-family="Liberation Sans" transform="translate(287 842) scale(0.8 1) translate(-287 -842)">SKALA  1 : 200</text></svg></div>

<!-- Status bar -->
<div class="a" style="left:8px;top:993px;width:1900px;height:29px;background:#393939;border-radius:0 0 9px 9px"></div>
<!-- right/left desktop strips -->
<div class="a" style="left:1909px;top:390px;width:5px;height:198px;background:#a9a9a9"></div>
<div class="a" style="left:1909px;top:588px;width:5px;height:157px;background:#e6e6e6"></div>
<div class="a" style="left:1908px;top:0;width:1px;height:1021px;background:#6e2418"></div>
<div class="a" style="left:7px;top:8px;width:1px;height:1013px;background:#6e2418"></div>
<!-- viewport controls -->
<svg style="left:0;top:0" width="1914" height="1033">
 <g stroke="#f4f4f4" stroke-width="2" fill="none">
  <path d="M1846 198.5h11"/>
  <rect x="1866" y="194" width="8" height="7" stroke-width="1.6"/><path d="M1868.5 191.5h8v7" stroke-width="1.6"/>
  <path d="M1887 192l9 9M1896 192l-9 9"/>
 </g>
 <!-- nav bar -->
 <rect x="1872" y="442" width="33" height="132" rx="4" fill="#8f8f8f" stroke="#6f6f6f" stroke-width="1.5"/>
 <rect x="1874" y="444" width="29" height="8" fill="#999"/>
 <circle cx="1898" cy="448" r="3" fill="none" stroke="#7a7a7a"/>
 <g stroke="#7c7c7c" stroke-width="1.3" fill="none">
  <circle cx="1886" cy="470" r="7"/><circle cx="1886" cy="470" r="3"/>
  <path d="M1876 489h24"/>
  <path d="M1880 515v-10a2 2 0 0 1 4 0v6v-9a2 2 0 0 1 4 0v9v-8a2 2 0 0 1 4 0v9v-6a2 2 0 0 1 4 0v8c0 6-3 9-8 9s-8-3-12-8"/>
  <path d="M1877 523l18 18M1895 523l-18 18"/><circle cx="1894" cy="539" r="4"/>
  <circle cx="1898" cy="568" r="3"/>
 </g>
 <path d="M1883 551h6l-3 3z" fill="#7a7a7a"/>
 <!-- UCS icon -->
 <g stroke="#1c3cf0" stroke-width="1.5" fill="none">
  <path d="M24.5 890.5V976.5H74.5Z"/>
  <path d="M24.5 968.5h8v8"/>
  <path d="M26 916l6 6 7-6M32 922v8"/>
  <path d="M52 962l13 12M65 962l-13 12"/>
 </g>
</svg>
<!-- command history -->
<div class="a" style="left:604px;top:893px;width:697px;height:30px;background:rgba(70,70,70,0.55);border-radius:3px"></div>
<div class="a mono" style="left:606px;top:894px">Autodesk DWG.  This file is a TrustedDWG last saved by an Autodesk application or Autodesk licensed
application.</div>
<div class="a" style="left:604px;top:928px;width:60px;height:15px;background:rgba(70,70,70,0.55);border-radius:3px"></div>
<div class="a mono" style="left:606px;top:929px">Command:</div>
<div class="a" style="left:604px;top:948px;width:60px;height:15px;background:rgba(70,70,70,0.55);border-radius:3px"></div>
<div class="a mono" style="left:606px;top:949px">Command:</div>
<!-- command input -->
<div class="a" style="left:545px;top:966px;width:53px;height:26px;background:linear-gradient(#6a6a6a,#555);border-radius:3px 0 0 3px"></div>
<div class="a" style="left:598px;top:966px;width:772px;height:26px;background:#e2e2e2"></div>
<svg style="left:0;top:0" width="1914" height="1033">
 <g fill="#aaa"><rect x="548" y="971" width="1.5" height="1.5"/><rect x="550.5" y="971" width="1.5" height="1.5"/><rect x="548" y="974" width="1.5" height="1.5"/><rect x="550.5" y="974" width="1.5" height="1.5"/><rect x="548" y="977" width="1.5" height="1.5"/><rect x="550.5" y="977" width="1.5" height="1.5"/><rect x="548" y="980" width="1.5" height="1.5"/><rect x="550.5" y="980" width="1.5" height="1.5"/><rect x="548" y="983" width="1.5" height="1.5"/><rect x="550.5" y="983" width="1.5" height="1.5"/><rect x="548" y="986" width="1.5" height="1.5"/><rect x="550.5" y="986" width="1.5" height="1.5"/></g>
 <path d="M560 975l7 7M567 975l-7 7" stroke="#f0f0f0" stroke-width="1.8"/>
 <path d="M581 976a3.5 3.5 0 1 0 4 4l6 6 2-2-6-6a3.5 3.5 0 0 0-4-4l2 2-1.5 1.5z" fill="#e8e8e8"/>
 <rect x="603.5" y="972.5" width="14" height="13" rx="1.5" fill="#d8d8d8" stroke="#8a8a8a"/>
 <path d="M606 976l3 2.5-3 2.5M610 982h4" stroke="#555" stroke-width="1" fill="none"/>
 <path d="M621 977h5l-2.5 3z" fill="#777"/>
 <path d="M1359 982l4-4 4 4z" fill="#333"/>
</svg>
<div class="a" style="left:634px;top:972px;font-family:'Liberation Mono',monospace;font-size:12px;font-style:italic;color:#9a9a9a;white-space:pre">Type a command</div>
<!-- layout tabs -->
<svg style="left:0;top:0" width="1914" height="1033">
 <path d="M18 994C24 994 23 1011 30 1011H70C76 1011 74 994 80 994Z" fill="#525252"/>
 <path d="M74 994C80 994 79 1011 86 1011H136C142 1011 140 994 146 994Z" fill="#6a6a6a"/>
 <path d="M146 1011C151 1011 150 995 156 995H170C166 995 167 1011 162 1011Z" fill="#474747"/>
 <path d="M153 1002h10M158 997v10" stroke="#d8d8d8" stroke-width="1.8"/>
</svg>
<div class="a" style="left:31px;top:995px;font-size:12.5px;color:#c8c8c8">Model</div>
<div class="a" style="left:88px;top:995px;font-size:12.5px;color:#f4f4f4;font-weight:bold">Layout1</div>
<!-- status bar right -->
<svg style="left:0;top:0" width="1914" height="1033">
 <g fill="#484848" stroke="#6a6a6a" stroke-width="1.5">
  <rect x="1451.5" y="995.5" width="41" height="23"/>
  <rect x="1495.5" y="995.5" width="102" height="23"/>
  <rect x="1598.5" y="995.5" width="63" height="23"/>
  <rect x="1663.5" y="995.5" width="73" height="23"/>
  <rect x="1738.5" y="995.5" width="39" height="23"/>
  <rect x="1779.5" y="995.5" width="24" height="23"/>
  <rect x="1805.5" y="995.5" width="25" height="23"/>
  <rect x="1832.5" y="995.5" width="24" height="23"/>
  <rect x="1858.5" y="995.5" width="48" height="23"/>
 </g>
 <rect x="1496" y="996" width="22" height="22" fill="#5b8fc7"/>
 <rect x="1623" y="996" width="22" height="22" fill="#5b8fc7"/>
 <g stroke="#e8e8e8" stroke-width="1.4" fill="none">
  <path d="M1500 1000v14h12"/><path d="M1500 1009h4v5"/>
  <circle cx="1527" cy="1010" r="5"/><path d="M1527 1010l8-6M1523 1010h14"/>
  <path d="M1603 1014l11-8"/><path d="M1603 1014h11"/>
  <rect x="1627.5" y="1002.5" width="12" height="12"/><rect x="1625" y="999" width="4" height="4"/>
  <rect x="1668" y="1000" width="14" height="14" stroke-dasharray="2 1.5"/><rect x="1672" y="1005" width="6" height="6"/><path d="M1668 1000l4 4"/>
  <circle cx="1702" cy="1002" r="2.5"/>
  <path d="M1781 1007h20M1791 998v18" stroke-width="1.8"/>
  <rect x="1810" y="999" width="6" height="6"/><circle cx="1825" cy="1006" r="3"/><path d="M1814 1016l3-5 3 5z"/>
  <rect x="1863" y="1001" width="14" height="11"/><path d="M1866 1009l3-3M1874 1003l-3 3"/>
  <path d="M1886 1000h16M1886 1007h16M1886 1014h16" stroke-width="1.8"/>
 </g>
 <path d="M1699 1016l4-16 5 16-5-4z" fill="#e0e0e0"/><path d="M1718 1016l4-16 5 16-5-4z" fill="#e0e0e0"/>
 <path d="M1573 1000l-8 15M1569 998v20" stroke="#58c058" stroke-width="1"/><path d="M1565 1000l10 14" stroke="#e04040" stroke-width="1.2"/>
 <circle cx="1750" cy="1007" r="6" fill="#e0e0e0"/><circle cx="1750" cy="1007" r="2.3" fill="#484848"/>
 <path d="M1546 1005h7l-3.5 4zM1586 1005h7l-3.5 4zM1650 1005h7l-3.5 4zM1766 1005h7l-3.5 4z" fill="#e8e8e8"/>
 <rect x="1837" y="999" width="14" height="10" fill="#58aee8"/><rect x="1837" y="1009" width="8" height="5" fill="#f0d040"/><path d="M1844 1012l3 3 5-6" stroke="#40c040" stroke-width="1.5" fill="none"/>
</svg>
<div class="a" style="left:1455px;top:1000px;font-size:11px;color:#f4f4f4">PAPER</div>
<div class="a" style="left:0;top:1023px;width:1914px;height:10px;overflow:hidden;background:#151515"><div class="a" style="left:14px;top:-9px;font-size:12px;color:#d8d8d8;white-space:pre">66 items  |  1 item selected  456 KB  |</div><div class="a" style="left:0;top:9px;width:1914px;height:1px;background:#4a3c34"></div></div>

</body></html>
